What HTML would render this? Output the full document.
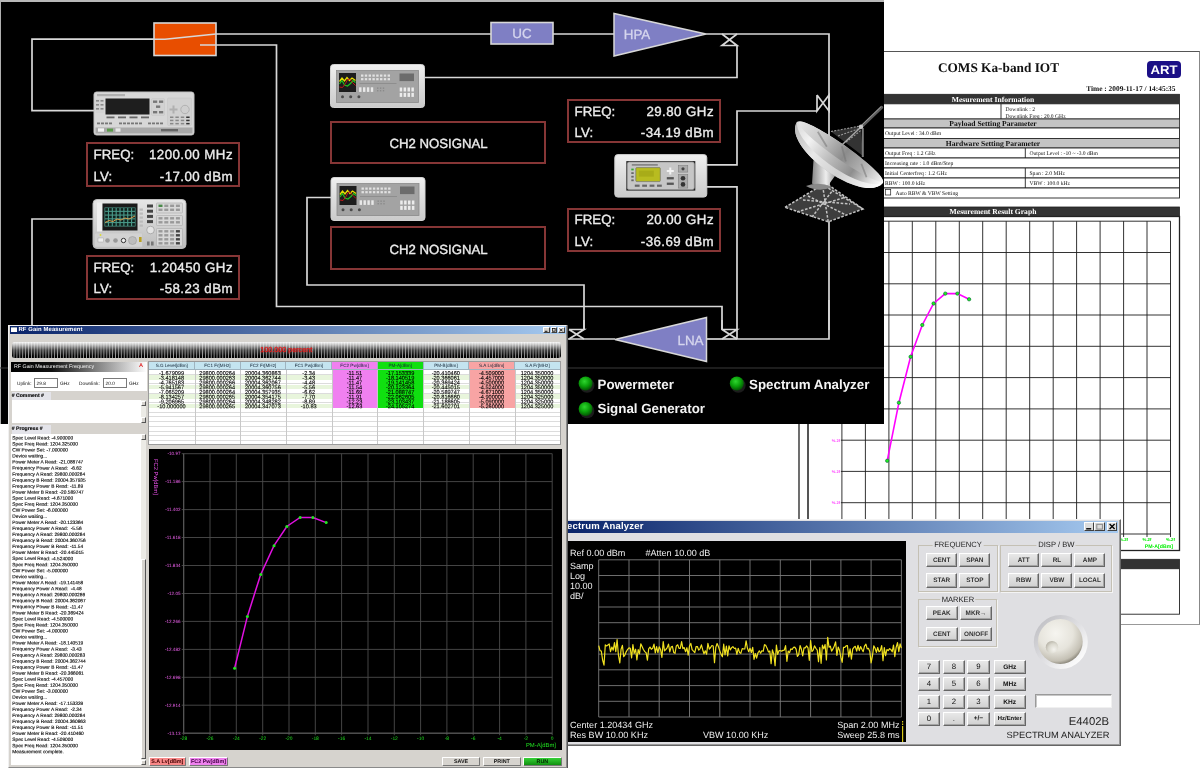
<!DOCTYPE html>
<html><head><meta charset="utf-8"><title>COMS Ka-band IOT</title>
<style>
*{box-sizing:border-box;margin:0;padding:0}
html,body{width:1200px;height:769px;overflow:hidden;background:#fff;font-family:"Liberation Sans",sans-serif}
#root{position:relative;width:1200px;height:769px;overflow:hidden;text-rendering:geometricPrecision;will-change:transform}
.abs{position:absolute}
svg{position:absolute;left:0;top:0;overflow:visible}
svg text{font-family:"Liberation Sans",sans-serif}
svg text.sf{font-family:"Liberation Serif",serif}
.fb{position:absolute;border:2px solid #863636;color:#ececec;font-size:13.3px;-webkit-text-stroke:0.35px #ececec}
.fb span{position:absolute;white-space:nowrap}
.btn{position:absolute;background:linear-gradient(180deg,#e8e8e8,#d0d0d0);border:1.3px solid #fff;border-right-color:#666;border-bottom-color:#666;box-shadow:inset -1px -1px 0 #a4a4a4;font-size:6.5px;font-weight:bold;color:#333;text-align:center;white-space:nowrap}
.grp{position:absolute;border:1px solid #c4c0b4;box-shadow:1px 1px 0 #f4f4f4}
.grp b{position:absolute;top:-5.6px;left:50%;transform:translateX(-50%);background:#dfdfe2;font-weight:normal;font-size:7.6px;color:#222;padding:0 1.5px;white-space:nowrap}
</style></head><body><div id="root">
<!-- ===== report paper ===== -->
<div class="abs" id="paper" style="left:560px;top:51px;width:640px;height:574px;background:#fff;border-top:1px solid #555;border-right:1px solid #888;border-bottom:1px solid #999"></div>
<svg width="1200" height="769" viewBox="0 0 1200 769" style="font-family:'Liberation Serif',serif">
<text x="998.5" y="72.3" text-anchor="middle" class="sf" font-weight="bold" font-size="13.3" fill="#111">COMS Ka-band IOT</text>
<rect x="1147" y="61" width="34" height="17" rx="4" fill="#1b0f86"/>
<text x="1164" y="74.3" text-anchor="middle" font-family="Liberation Sans, sans-serif" font-weight="bold" font-size="12.5" fill="#fff" textLength="27" lengthAdjust="spacingAndGlyphs">ART</text>
<text x="1175.5" y="91" text-anchor="end" class="sf" font-weight="bold" font-size="7.4" fill="#111">Time : 2009-11-17 / 14:45:35</text>
<rect x="799" y="94.3" width="380.5" height="9.5" fill="#333" stroke="#222" stroke-width="0.8"/>
<text x="993" y="101.64999999999999" text-anchor="middle" class="sf" font-weight="bold" font-size="7.6" fill="#fff">Mesurement Information</text>
<rect x="799" y="103.8" width="380.5" height="15.200000000000003" fill="#fff" stroke="#222" stroke-width="0.9"/>
<line x1="1001" y1="103.8" x2="1001" y2="119" stroke="#222" stroke-width="0.9"/>
<text x="1005.5" y="110.5" class="sf" font-size="5.6" fill="#111">Downlink : 2</text>
<text x="1005.5" y="117.8" class="sf" font-size="5.6" fill="#111">Downlink Freq : 20.0 GHz</text>
<text x="803" y="110.5" class="sf" font-size="5.6" fill="#111">Uplink : 1</text>
<text x="803" y="117.8" class="sf" font-size="5.6" fill="#111">Uplink Freq : 29.8 GHz</text>
<rect x="799" y="119" width="380.5" height="9" fill="#c4c4c4" stroke="#222" stroke-width="0.8"/>
<text x="993" y="126.1" text-anchor="middle" class="sf" font-weight="bold" font-size="7.6" fill="#111">Payload Setting Parameter</text>
<rect x="799" y="128" width="380.5" height="10.5" fill="#fff" stroke="#222" stroke-width="0.9"/>
<text x="885" y="135.3" class="sf" font-size="5.6" fill="#111">Output Level : 34.0 dBm</text>
<rect x="799" y="138.5" width="380.5" height="9.5" fill="#c4c4c4" stroke="#222" stroke-width="0.8"/>
<text x="993" y="145.85" text-anchor="middle" class="sf" font-weight="bold" font-size="7.6" fill="#111">Hardware Setting Parameter</text>
<rect x="799" y="148" width="380.5" height="10" fill="#fff" stroke="#222" stroke-width="0.9"/>
<line x1="1025.3" y1="148" x2="1025.3" y2="158" stroke="#222" stroke-width="0.9"/>
<text x="885" y="155" class="sf" font-size="5.6" fill="#111">Output Freq : 1.2 GHz</text>
<text x="1029.5" y="155" class="sf" font-size="5.6" fill="#111">Output Level : -10 ~ -3.0 dBm</text>
<rect x="799" y="158" width="380.5" height="10" fill="#fff" stroke="#222" stroke-width="0.9"/>
<text x="885" y="165" class="sf" font-size="5.6" fill="#111">Increasing rate : 1.0 dBm/Step</text>
<rect x="799" y="168" width="380.5" height="10" fill="#fff" stroke="#222" stroke-width="0.9"/>
<line x1="1025.3" y1="168" x2="1025.3" y2="178" stroke="#222" stroke-width="0.9"/>
<text x="885" y="175" class="sf" font-size="5.6" fill="#111">Initial Centerfreq : 1.2 GHz</text>
<text x="1029.5" y="175" class="sf" font-size="5.6" fill="#111">Span : 2.0 MHz</text>
<rect x="799" y="178" width="380.5" height="10" fill="#fff" stroke="#222" stroke-width="0.9"/>
<line x1="1025.3" y1="178" x2="1025.3" y2="188" stroke="#222" stroke-width="0.9"/>
<text x="885" y="185" class="sf" font-size="5.6" fill="#111">RBW : 100.0 kHz</text>
<text x="1029.5" y="185" class="sf" font-size="5.6" fill="#111">VBW : 100.0 kHz</text>
<rect x="799" y="188" width="380.5" height="10" fill="#fff" stroke="#222" stroke-width="0.9"/>
<text x="895.5" y="195" class="sf" font-size="5.6" fill="#111">Auto RBW &amp; VBW Setting</text>
<rect x="885.3" y="189.6" width="5.4" height="5.4" fill="#fff" stroke="#222" stroke-width="0.7"/>
<rect x="799" y="207" width="380.5" height="9.5" fill="#333" stroke="#222" stroke-width="0.8"/>
<text x="993" y="214.35" text-anchor="middle" class="sf" font-weight="bold" font-size="7.6" fill="#fff">Mesurement Result Graph</text>
<rect x="799" y="216.5" width="380.5" height="334" fill="#fff" stroke="#222" stroke-width="1.3"/>
<g stroke="#1c1c1c" stroke-width="0.9">
<line x1="808" y1="216.5" x2="808" y2="550" stroke-width="1.5"/>
<line x1="1170.5" y1="221.2" x2="1170.5" y2="537.0"/>
<line x1="1147.0" y1="221.2" x2="1147.0" y2="537.0"/>
<line x1="1123.6" y1="221.2" x2="1123.6" y2="537.0"/>
<line x1="1100.1" y1="221.2" x2="1100.1" y2="537.0"/>
<line x1="1076.6" y1="221.2" x2="1076.6" y2="537.0"/>
<line x1="1053.2" y1="221.2" x2="1053.2" y2="537.0"/>
<line x1="1029.7" y1="221.2" x2="1029.7" y2="537.0"/>
<line x1="1006.2" y1="221.2" x2="1006.2" y2="537.0"/>
<line x1="982.7" y1="221.2" x2="982.7" y2="537.0"/>
<line x1="959.3" y1="221.2" x2="959.3" y2="537.0"/>
<line x1="935.8" y1="221.2" x2="935.8" y2="537.0"/>
<line x1="912.3" y1="221.2" x2="912.3" y2="537.0"/>
<line x1="888.9" y1="221.2" x2="888.9" y2="537.0"/>
<line x1="865.4" y1="221.2" x2="865.4" y2="537.0"/>
<line x1="841.9" y1="221.2" x2="841.9" y2="537.0"/>
<line x1="840.9" y1="221.2" x2="1170.5" y2="221.2"/>
<line x1="840.9" y1="252.5" x2="1170.5" y2="252.5"/>
<line x1="840.9" y1="283.8" x2="1170.5" y2="283.8"/>
<line x1="840.9" y1="315.0" x2="1170.5" y2="315.0"/>
<line x1="840.9" y1="346.3" x2="1170.5" y2="346.3"/>
<line x1="840.9" y1="377.6" x2="1170.5" y2="377.6"/>
<line x1="840.9" y1="408.9" x2="1170.5" y2="408.9"/>
<line x1="840.9" y1="440.2" x2="1170.5" y2="440.2"/>
<line x1="840.9" y1="471.4" x2="1170.5" y2="471.4"/>
<line x1="840.9" y1="502.7" x2="1170.5" y2="502.7"/>
<line x1="840.9" y1="534.0" x2="1170.5" y2="534.0"/>
</g>
<polyline fill="none" stroke="#f0f" stroke-width="1.6" points="887.2,460.8 898.9,402.7 910.6,356.8 922.3,325 933.6,303.5 945.3,293.6 957.4,293.6 969.1,299.3"/>
<circle cx="887.2" cy="460.8" r="1.7" fill="#2e2" stroke="#063" stroke-width="0.6"/>
<circle cx="898.9" cy="402.7" r="1.7" fill="#2e2" stroke="#063" stroke-width="0.6"/>
<circle cx="910.6" cy="356.8" r="1.7" fill="#2e2" stroke="#063" stroke-width="0.6"/>
<circle cx="922.3" cy="325" r="1.7" fill="#2e2" stroke="#063" stroke-width="0.6"/>
<circle cx="933.6" cy="303.5" r="1.7" fill="#2e2" stroke="#063" stroke-width="0.6"/>
<circle cx="945.3" cy="293.6" r="1.7" fill="#2e2" stroke="#063" stroke-width="0.6"/>
<circle cx="957.4" cy="293.6" r="1.7" fill="#2e2" stroke="#063" stroke-width="0.6"/>
<circle cx="969.1" cy="299.3" r="1.7" fill="#2e2" stroke="#063" stroke-width="0.6"/>
<text x="840" y="222.7" text-anchor="end" font-family="Liberation Sans, sans-serif" font-size="4" font-weight="bold" fill="#f4f">%.2f</text>
<text x="840" y="254.0" text-anchor="end" font-family="Liberation Sans, sans-serif" font-size="4" font-weight="bold" fill="#f4f">%.2f</text>
<text x="840" y="285.3" text-anchor="end" font-family="Liberation Sans, sans-serif" font-size="4" font-weight="bold" fill="#f4f">%.2f</text>
<text x="840" y="316.5" text-anchor="end" font-family="Liberation Sans, sans-serif" font-size="4" font-weight="bold" fill="#f4f">%.2f</text>
<text x="840" y="347.8" text-anchor="end" font-family="Liberation Sans, sans-serif" font-size="4" font-weight="bold" fill="#f4f">%.2f</text>
<text x="840" y="379.1" text-anchor="end" font-family="Liberation Sans, sans-serif" font-size="4" font-weight="bold" fill="#f4f">%.2f</text>
<text x="840" y="410.4" text-anchor="end" font-family="Liberation Sans, sans-serif" font-size="4" font-weight="bold" fill="#f4f">%.2f</text>
<text x="840" y="441.7" text-anchor="end" font-family="Liberation Sans, sans-serif" font-size="4" font-weight="bold" fill="#f4f">%.2f</text>
<text x="840" y="472.9" text-anchor="end" font-family="Liberation Sans, sans-serif" font-size="4" font-weight="bold" fill="#f4f">%.2f</text>
<text x="840" y="504.2" text-anchor="end" font-family="Liberation Sans, sans-serif" font-size="4" font-weight="bold" fill="#f4f">%.2f</text>
<text x="840" y="535.5" text-anchor="end" font-family="Liberation Sans, sans-serif" font-size="4" font-weight="bold" fill="#f4f">%.2f</text>
<text x="1170.5" y="541" text-anchor="middle" font-family="Liberation Sans, sans-serif" font-size="4.3" font-weight="bold" fill="#0e0">%.2f</text>
<text x="1147.0" y="541" text-anchor="middle" font-family="Liberation Sans, sans-serif" font-size="4.3" font-weight="bold" fill="#0e0">%.2f</text>
<text x="1123.6" y="541" text-anchor="middle" font-family="Liberation Sans, sans-serif" font-size="4.3" font-weight="bold" fill="#0e0">%.2f</text>
<text x="1100.1" y="541" text-anchor="middle" font-family="Liberation Sans, sans-serif" font-size="4.3" font-weight="bold" fill="#0e0">%.2f</text>
<text x="1076.6" y="541" text-anchor="middle" font-family="Liberation Sans, sans-serif" font-size="4.3" font-weight="bold" fill="#0e0">%.2f</text>
<text x="1053.2" y="541" text-anchor="middle" font-family="Liberation Sans, sans-serif" font-size="4.3" font-weight="bold" fill="#0e0">%.2f</text>
<text x="1029.7" y="541" text-anchor="middle" font-family="Liberation Sans, sans-serif" font-size="4.3" font-weight="bold" fill="#0e0">%.2f</text>
<text x="1006.2" y="541" text-anchor="middle" font-family="Liberation Sans, sans-serif" font-size="4.3" font-weight="bold" fill="#0e0">%.2f</text>
<text x="982.7" y="541" text-anchor="middle" font-family="Liberation Sans, sans-serif" font-size="4.3" font-weight="bold" fill="#0e0">%.2f</text>
<text x="959.3" y="541" text-anchor="middle" font-family="Liberation Sans, sans-serif" font-size="4.3" font-weight="bold" fill="#0e0">%.2f</text>
<text x="935.8" y="541" text-anchor="middle" font-family="Liberation Sans, sans-serif" font-size="4.3" font-weight="bold" fill="#0e0">%.2f</text>
<text x="912.3" y="541" text-anchor="middle" font-family="Liberation Sans, sans-serif" font-size="4.3" font-weight="bold" fill="#0e0">%.2f</text>
<text x="888.9" y="541" text-anchor="middle" font-family="Liberation Sans, sans-serif" font-size="4.3" font-weight="bold" fill="#0e0">%.2f</text>
<text x="865.4" y="541" text-anchor="middle" font-family="Liberation Sans, sans-serif" font-size="4.3" font-weight="bold" fill="#0e0">%.2f</text>
<text x="841.9" y="541" text-anchor="middle" font-family="Liberation Sans, sans-serif" font-size="4.3" font-weight="bold" fill="#0e0">%.2f</text>
<text x="1173" y="547.5" text-anchor="end" font-family="Liberation Sans, sans-serif" font-size="5.2" font-weight="bold" fill="#0e0">PM-A[dBm]</text>
<rect x="799" y="559.3" width="380.5" height="9.4" fill="#333" stroke="#222" stroke-width="0.8"/>
<rect x="799" y="568.7" width="380.5" height="45.5" fill="#fff" stroke="#222" stroke-width="0.9"/>
<text x="993" y="566.6" text-anchor="middle" class="sf" font-weight="bold" font-size="7.6" fill="#fff">Mesurement Result Table</text>
</svg>
<!-- ===== block diagram ===== -->
<div class="abs" id="diagram" style="left:0;top:0;width:884px;height:424px;background:#000;border-top:2px solid #b8b8b8;border-left:1.5px solid #b0b0b0"></div>
<svg width="1200" height="769" viewBox="0 0 1200 769">
<g fill="none" stroke="#d8d8d8" stroke-width="1.7" stroke-linejoin="miter">
<path d="M154 39.2 H32 V110.7 H94"/>
<path d="M93 219 H32 V330"/>
<path d="M216 34 H491"/>
<path d="M553 34 H614"/>
<path d="M706 34 H829 V330"/>
<path d="M216 45 H276.5 V306.5 H722 V330"/>
<path d="M424 77.5 H737 V45.5"/>
<path d="M331 197.5 H307 V285 H584 V330"/>
<path d="M706 164.9 H737 V111 H817"/>
<path d="M706 186.8 H737 V339"/>
<path d="M829 300 V339 H737"/>
<path d="M706.5 339 H737"/>
<path d="M615 339 H567"/>
<path d="M584 320 V329.5"/>
<path d="M722 320 V329.5"/>
<path d="M722 34 L737 45.5 H722 L737 34"/>
<path d="M817 95 V111 L829 95 V111 L817 95"/>
<path d="M569 329.5 H584 L569 339 M584 339 L569 329.5"/>
<path d="M722 329.5 H737 L722 339 M737 339 L722 329.5"/>
</g>
<line x1="0" y1="368" x2="884" y2="368" stroke="#3a3a3a" stroke-width="1.2"/>
<rect x="154" y="23" width="62" height="32.5" fill="#e84e00" stroke="#d8d8d8" stroke-width="1.6"/>
<path d="M154 39.2 H165 L216 34 M200 45 H216" stroke="#d8d8d8" stroke-width="1.5" fill="none"/>
<rect x="491" y="22.5" width="62" height="21.5" fill="#7f7fc4" stroke="#d8d8d8" stroke-width="1.6"/>
<text x="522" y="38.3" text-anchor="middle" font-size="13.4" stroke="#d6d6ee" stroke-width=".3" fill="#d6d6ee">UC</text>
<path d="M614 13.5 V56 L706 34 Z" fill="#7f7fc4" stroke="#d8d8d8" stroke-width="1.5"/>
<text x="637" y="39" text-anchor="middle" font-size="13.4" stroke="#d6d6ee" stroke-width=".3" fill="#d6d6ee">HPA</text>
<path d="M706.5 317.5 V361.5 L615 339.5 Z" fill="#7f7fc4" stroke="#d8d8d8" stroke-width="1.5"/>
<text x="690.5" y="344.7" text-anchor="middle" font-size="13.4" stroke="#d6d6ee" stroke-width=".3" fill="#d6d6ee">LNA</text>
<defs>
<radialGradient id="led" cx="42%" cy="35%" r="65%"><stop offset="0" stop-color="#2fd52f"/><stop offset="0.55" stop-color="#0aa00a"/><stop offset="1" stop-color="#045404"/></radialGradient>
<linearGradient id="devg2" x1="0" y1="0" x2="0" y2="1"><stop offset="0" stop-color="#f0f0f0"/><stop offset="0.5" stop-color="#dcdcdc"/><stop offset="1" stop-color="#cbcbcb"/></linearGradient>
<linearGradient id="devg" x1="0" y1="0" x2="0" y2="1"><stop offset="0" stop-color="#e6e6e6"/><stop offset="1" stop-color="#bdbdbd"/></linearGradient>
<linearGradient id="dish" x1="0" y1="0" x2="1" y2="0"><stop offset="0" stop-color="#d8d8d8"/><stop offset="0.2" stop-color="#f2f2f2"/><stop offset="0.45" stop-color="#bcbcbc"/><stop offset="0.7" stop-color="#8e8e8e"/><stop offset="0.9" stop-color="#e4e4e4"/><stop offset="1" stop-color="#ffffff"/></linearGradient>
<linearGradient id="dishlo" x1="0" y1="0" x2="1" y2="0"><stop offset="0" stop-color="#b8b8b8"/><stop offset="0.3" stop-color="#e8e8e8"/><stop offset="0.6" stop-color="#d0d0d0"/><stop offset="1" stop-color="#ffffff"/></linearGradient>
<linearGradient id="rim" x1="0" y1="0" x2="1" y2="0"><stop offset="0" stop-color="#e4e4e4"/><stop offset="0.3" stop-color="#c4c4c4"/><stop offset="0.55" stop-color="#8c8c8c"/><stop offset="0.8" stop-color="#b8b8b8"/><stop offset="1" stop-color="#f4f4f4"/></linearGradient>
<linearGradient id="ped" x1="0" y1="0" x2="1" y2="0"><stop offset="0" stop-color="#888"/><stop offset="0.5" stop-color="#eee"/><stop offset="1" stop-color="#777"/></linearGradient>
</defs>
<circle cx="587.1" cy="385.5" r="7.3" fill="#1c1c1c"/>
<circle cx="585.6" cy="383.5" r="7" fill="url(#led)"/>
<circle cx="738.3" cy="385.5" r="7.3" fill="#1c1c1c"/>
<circle cx="736.8" cy="383.5" r="7" fill="url(#led)"/>
<circle cx="587.1" cy="411" r="7.3" fill="#1c1c1c"/>
<circle cx="585.6" cy="409" r="7" fill="url(#led)"/>
<text x="597.5" y="389" font-size="13.35" font-weight="bold" fill="#f4f4f4">Powermeter</text>
<text x="749" y="389" font-size="13.35" font-weight="bold" fill="#f4f4f4">Spectrum Analyzer</text>
<text x="597.5" y="413.3" font-size="13.35" font-weight="bold" fill="#f4f4f4">Signal Generator</text>
<g transform="translate(94,92)">
<rect x="0" y="0" width="100" height="43" rx="2.5" fill="#d7d7d7" stroke="#c2c2c2" stroke-width="1"/>
<rect x="73.5" y="6" width="24" height="27.5" rx="1" fill="#d1d1d1" stroke="#c6c6c6" stroke-width="0.6"/>
<rect x="57.5" y="6.5" width="13" height="17" rx="1" fill="#d2d2d2" stroke="#c8c8c8" stroke-width="0.6"/>
<rect x="1.5" y="7" width="8.5" height="14" rx="1" fill="#d2d2d2"/>
<rect x="3" y="2" width="28" height="2.2" fill="#b0b0b0"/>
<rect x="11.5" y="6.5" width="44" height="16" fill="#1e1e1e"/>
<rect x="1.5" y="35.5" width="97" height="6" fill="#a9a9a9"/>
<rect x="4" y="36.3" width="6" height="3.4" fill="#f4f4f4"/><rect x="13" y="36.6" width="6" height="3" fill="#5a9a4a"/><rect x="21.5" y="36.3" width="5" height="3.4" fill="#e8e8e8"/>
<rect x="67" y="37" width="17" height="2.4" fill="#666"/>
<rect x="12.5" y="24.5" width="8" height="1.8" fill="#666"/>
<rect x="24.0" y="24.5" width="8" height="1.8" fill="#666"/>
<rect x="35.5" y="24.5" width="8" height="1.8" fill="#666"/>
<rect x="47.0" y="24.5" width="8" height="1.8" fill="#666"/>
<rect x="3" y="30.5" width="3" height="1.8" fill="#777"/>
<rect x="7" y="30.5" width="3" height="1.8" fill="#777"/>
<rect x="11" y="30.5" width="3" height="1.8" fill="#777"/>
<rect x="15" y="30.5" width="3" height="1.8" fill="#777"/>
<rect x="25" y="30.5" width="3" height="1.8" fill="#777"/>
<rect x="29" y="30.5" width="3" height="1.8" fill="#777"/>
<rect x="33" y="30.5" width="3" height="1.8" fill="#777"/>
<rect x="37" y="30.5" width="3" height="1.8" fill="#777"/>
<rect x="41" y="30.5" width="3" height="1.8" fill="#777"/>
<rect x="45" y="30.5" width="3" height="1.8" fill="#777"/>
<rect x="54" y="30.5" width="3" height="1.8" fill="#777"/>
<rect x="58" y="30.5" width="3" height="1.8" fill="#777"/>
<rect x="62" y="30.5" width="3" height="1.8" fill="#777"/>
<rect x="66" y="30.5" width="3" height="1.8" fill="#777"/>
<rect x="2.0" y="8" width="3" height="1.6" fill="#8a8a8a"/>
<rect x="6.5" y="8" width="3" height="1.6" fill="#8a8a8a"/>
<rect x="2.0" y="12" width="3" height="1.6" fill="#8a8a8a"/>
<rect x="6.5" y="12" width="3" height="1.6" fill="#8a8a8a"/>
<rect x="2.0" y="16" width="3" height="1.6" fill="#8a8a8a"/>
<rect x="6.5" y="16" width="3" height="1.6" fill="#8a8a8a"/>
<rect x="59" y="8.5" width="4.2" height="2.4" fill="#777"/>
<rect x="65" y="8.5" width="4.2" height="2.4" fill="#777"/>
<rect x="62" y="13.5" width="4.2" height="2.4" fill="#777"/>
<rect x="59" y="19" width="4.2" height="2.4" fill="#777"/>
<rect x="65" y="19" width="4.2" height="2.4" fill="#777"/>
<circle cx="91" cy="17.5" r="4.2" fill="#cfcfcf" stroke="#aaa" stroke-width="0.8"/>
<path d="M79.5 13.5 v8 M75.5 17.5 h8" stroke="#b0b0b0" stroke-width="2"/>
<rect x="76.0" y="24.5" width="3.4" height="1.5" fill="#888"/>
<rect x="81.4" y="24.5" width="3.4" height="1.5" fill="#888"/>
<rect x="86.8" y="24.5" width="3.4" height="1.5" fill="#888"/>
<rect x="92.2" y="24.5" width="3.4" height="1.5" fill="#333"/>
<rect x="76.0" y="27.7" width="3.4" height="1.5" fill="#888"/>
<rect x="81.4" y="27.7" width="3.4" height="1.5" fill="#888"/>
<rect x="86.8" y="27.7" width="3.4" height="1.5" fill="#888"/>
<rect x="92.2" y="27.7" width="3.4" height="1.5" fill="#333"/>
<rect x="76.0" y="30.9" width="3.4" height="1.5" fill="#888"/>
<rect x="81.4" y="30.9" width="3.4" height="1.5" fill="#888"/>
<rect x="86.8" y="30.9" width="3.4" height="1.5" fill="#888"/>
<rect x="92.2" y="30.9" width="3.4" height="1.5" fill="#333"/>
</g>
<g transform="translate(93,199.5)">
<rect x="0" y="0" width="93" height="49" rx="4" fill="url(#devg)" stroke="#bbb" stroke-width="1"/>
<rect x="4" y="3" width="5" height="29" fill="#eee"/>
<rect x="9.5" y="4" width="35" height="27" fill="#1a1a1a"/>
<rect x="11.5" y="8" width="31" height="19" fill="#4a9a8a"/>
<rect x="12.2" y="8.6" width="2.7" height="2.7" fill="#10201c"/>
<rect x="16.05" y="8.6" width="2.7" height="2.7" fill="#10201c"/>
<rect x="19.9" y="8.6" width="2.7" height="2.7" fill="#10201c"/>
<rect x="23.75" y="8.6" width="2.7" height="2.7" fill="#10201c"/>
<rect x="27.6" y="8.6" width="2.7" height="2.7" fill="#10201c"/>
<rect x="31.45" y="8.6" width="2.7" height="2.7" fill="#10201c"/>
<rect x="35.3" y="8.6" width="2.7" height="2.7" fill="#10201c"/>
<rect x="39.15" y="8.6" width="2.7" height="2.7" fill="#10201c"/>
<rect x="12.2" y="12.35" width="2.7" height="2.7" fill="#10201c"/>
<rect x="16.05" y="12.35" width="2.7" height="2.7" fill="#10201c"/>
<rect x="19.9" y="12.35" width="2.7" height="2.7" fill="#10201c"/>
<rect x="23.75" y="12.35" width="2.7" height="2.7" fill="#10201c"/>
<rect x="27.6" y="12.35" width="2.7" height="2.7" fill="#10201c"/>
<rect x="31.45" y="12.35" width="2.7" height="2.7" fill="#10201c"/>
<rect x="35.3" y="12.35" width="2.7" height="2.7" fill="#10201c"/>
<rect x="39.15" y="12.35" width="2.7" height="2.7" fill="#10201c"/>
<rect x="12.2" y="16.1" width="2.7" height="2.7" fill="#10201c"/>
<rect x="16.05" y="16.1" width="2.7" height="2.7" fill="#10201c"/>
<rect x="19.9" y="16.1" width="2.7" height="2.7" fill="#10201c"/>
<rect x="23.75" y="16.1" width="2.7" height="2.7" fill="#10201c"/>
<rect x="27.6" y="16.1" width="2.7" height="2.7" fill="#10201c"/>
<rect x="31.45" y="16.1" width="2.7" height="2.7" fill="#10201c"/>
<rect x="35.3" y="16.1" width="2.7" height="2.7" fill="#10201c"/>
<rect x="39.15" y="16.1" width="2.7" height="2.7" fill="#10201c"/>
<rect x="12.2" y="19.85" width="2.7" height="2.7" fill="#10201c"/>
<rect x="16.05" y="19.85" width="2.7" height="2.7" fill="#10201c"/>
<rect x="19.9" y="19.85" width="2.7" height="2.7" fill="#10201c"/>
<rect x="23.75" y="19.85" width="2.7" height="2.7" fill="#10201c"/>
<rect x="27.6" y="19.85" width="2.7" height="2.7" fill="#10201c"/>
<rect x="31.45" y="19.85" width="2.7" height="2.7" fill="#10201c"/>
<rect x="35.3" y="19.85" width="2.7" height="2.7" fill="#10201c"/>
<rect x="39.15" y="19.85" width="2.7" height="2.7" fill="#10201c"/>
<rect x="12.2" y="23.6" width="2.7" height="2.7" fill="#10201c"/>
<rect x="16.05" y="23.6" width="2.7" height="2.7" fill="#10201c"/>
<rect x="19.9" y="23.6" width="2.7" height="2.7" fill="#10201c"/>
<rect x="23.75" y="23.6" width="2.7" height="2.7" fill="#10201c"/>
<rect x="27.6" y="23.6" width="2.7" height="2.7" fill="#10201c"/>
<rect x="31.45" y="23.6" width="2.7" height="2.7" fill="#10201c"/>
<rect x="35.3" y="23.6" width="2.7" height="2.7" fill="#10201c"/>
<rect x="39.15" y="23.6" width="2.7" height="2.7" fill="#10201c"/>
<polyline points="12,23 16,21 20,22 24,19.5 28,20.5 32,18.5 36,19.5 42,16.5" fill="none" stroke="#d8a050" stroke-width="1"/>
<rect x="1.5" y="33.5" width="48" height="14" rx="1" fill="#d2d2d2" stroke="#c0c0c0" stroke-width="0.5"/>
<rect x="5" y="38.5" width="5.5" height="4" fill="#eee" stroke="#999" stroke-width="0.4"/><circle cx="7.5" cy="35.5" r="0.9" fill="#dd3"/>
<circle cx="14.5" cy="41" r="2.3" fill="#999"/>
<circle cx="22.5" cy="41" r="2.3" fill="#999"/>
<circle cx="30.5" cy="41" r="2.2" fill="#eee" stroke="#333" stroke-width="1"/>
<circle cx="39.5" cy="41" r="4" fill="#bdbdbd" stroke="#999" stroke-width="0.6"/>
<rect x="46" y="37.5" width="2.6" height="5" fill="#b8a020"/>
<rect x="46.5" y="9" width="3.4" height="2.2" fill="#bbb"/>
<rect x="46.5" y="13" width="3.4" height="2.2" fill="#bbb"/>
<rect x="46.5" y="17" width="3.4" height="2.2" fill="#bbb"/>
<rect x="46.5" y="21" width="3.4" height="2.2" fill="#bbb"/>
<rect x="46.5" y="25" width="3.4" height="2.2" fill="#bbb"/>
<rect x="54" y="5.0" width="6" height="3" fill="#444"/>
<rect x="54" y="10.2" width="6" height="3" fill="#444"/>
<rect x="54" y="15.4" width="6" height="3" fill="#444"/>
<rect x="54" y="20.6" width="6" height="3" fill="#444"/>
<circle cx="57.5" cy="30.5" r="3.8" fill="#e4e4e4" stroke="#999" stroke-width="0.7"/>
<rect x="54" y="42" width="2.6" height="4" fill="#777"/><rect x="58" y="42" width="2.6" height="4" fill="#777"/>
<rect x="63.5" y="3.5" width="26" height="10" rx="0.8" fill="#d8d8d8" stroke="#aaa" stroke-width="0.6"/>
<rect x="65.5" y="5.1" width="4" height="2.4" fill="#4a8a4a"/>
<rect x="71.3" y="5.1" width="4" height="2.4" fill="#999"/>
<rect x="77.1" y="5.1" width="4" height="2.4" fill="#999"/>
<rect x="82.9" y="5.1" width="4" height="2.4" fill="#999"/>
<rect x="65.5" y="9.1" width="4" height="2.4" fill="#999"/>
<rect x="71.3" y="9.1" width="4" height="2.4" fill="#999"/>
<rect x="77.1" y="9.1" width="4" height="2.4" fill="#999"/>
<rect x="82.9" y="9.1" width="4" height="2.4" fill="#999"/>
<rect x="63.5" y="16" width="26" height="10" rx="0.8" fill="#d8d8d8" stroke="#aaa" stroke-width="0.6"/>
<rect x="65.5" y="17.6" width="4" height="2.4" fill="#999"/>
<rect x="71.3" y="17.6" width="4" height="2.4" fill="#999"/>
<rect x="77.1" y="17.6" width="4" height="2.4" fill="#999"/>
<rect x="82.9" y="17.6" width="4" height="2.4" fill="#999"/>
<rect x="65.5" y="21.6" width="4" height="2.4" fill="#999"/>
<rect x="71.3" y="21.6" width="4" height="2.4" fill="#999"/>
<rect x="77.1" y="21.6" width="4" height="2.4" fill="#999"/>
<rect x="82.9" y="21.6" width="4" height="2.4" fill="#999"/>
<rect x="63.5" y="29" width="26" height="17.5" rx="0.8" fill="#d8d8d8" stroke="#aaa" stroke-width="0.6"/>
<rect x="65.5" y="30.6" width="4" height="2.4" fill="#999"/>
<rect x="71.3" y="30.6" width="4" height="2.4" fill="#999"/>
<rect x="77.1" y="30.6" width="4" height="2.4" fill="#999"/>
<rect x="82.9" y="30.6" width="4" height="2.4" fill="#444"/>
<rect x="65.5" y="34.6" width="4" height="2.4" fill="#999"/>
<rect x="71.3" y="34.6" width="4" height="2.4" fill="#999"/>
<rect x="77.1" y="34.6" width="4" height="2.4" fill="#999"/>
<rect x="82.9" y="34.6" width="4" height="2.4" fill="#444"/>
<rect x="65.5" y="38.6" width="4" height="2.4" fill="#999"/>
<rect x="71.3" y="38.6" width="4" height="2.4" fill="#999"/>
<rect x="77.1" y="38.6" width="4" height="2.4" fill="#999"/>
<rect x="82.9" y="38.6" width="4" height="2.4" fill="#444"/>
<rect x="65.5" y="42.6" width="4" height="2.4" fill="#999"/>
<rect x="71.3" y="42.6" width="4" height="2.4" fill="#999"/>
<rect x="77.1" y="42.6" width="4" height="2.4" fill="#999"/>
<rect x="82.9" y="42.6" width="4" height="2.4" fill="#444"/>
</g>
<g transform="translate(330.5,64.5)">
<rect x="0" y="0" width="94" height="43" rx="3" fill="url(#devg2)" stroke="#d2d2d2" stroke-width="1"/>
<rect x="6" y="6" width="82" height="32" fill="#a3a3a3" stroke="#8a8a8a" stroke-width="0.8"/>
<rect x="8.5" y="8.5" width="17" height="19" fill="#1c1c1c"/>
<polyline points="9,17 11.5,13.5 14,16.5 16.5,13 19,16 21.5,13.5 25,16" fill="none" stroke="#e8e000" stroke-width="1.3"/>
<polyline points="9,19.5 11.5,16 14,20.5 17,21.5 20,19 22.5,16 25,18" fill="none" stroke="#20c020" stroke-width="1.2"/>
<polyline points="9,22.5 12,23 15,19 17,15 19,14.5 22,18 25,21" fill="none" stroke="#c01818" stroke-width="1"/>
<rect x="30.5" y="10.0" width="2.4" height="2.2" fill="#e2e2e2"/>
<rect x="34.3" y="10.0" width="2.4" height="2.2" fill="#e2e2e2"/>
<rect x="38.1" y="10.0" width="2.4" height="2.2" fill="#e2e2e2"/>
<rect x="41.9" y="10.0" width="2.4" height="2.2" fill="#e2e2e2"/>
<rect x="45.7" y="10.0" width="2.4" height="2.2" fill="#e2e2e2"/>
<rect x="49.5" y="10.0" width="2.4" height="2.2" fill="#e2e2e2"/>
<rect x="53.3" y="10.0" width="2.4" height="2.2" fill="#e2e2e2"/>
<rect x="57.099999999999994" y="10.0" width="2.4" height="2.2" fill="#e2e2e2"/>
<rect x="30.5" y="13.6" width="2.4" height="2.2" fill="#e2e2e2"/>
<rect x="34.3" y="13.6" width="2.4" height="2.2" fill="#e2e2e2"/>
<rect x="38.1" y="13.6" width="2.4" height="2.2" fill="#e2e2e2"/>
<rect x="41.9" y="13.6" width="2.4" height="2.2" fill="#e2e2e2"/>
<rect x="45.7" y="13.6" width="2.4" height="2.2" fill="#e2e2e2"/>
<rect x="49.5" y="13.6" width="2.4" height="2.2" fill="#e2e2e2"/>
<rect x="53.3" y="13.6" width="2.4" height="2.2" fill="#e2e2e2"/>
<rect x="57.099999999999994" y="13.6" width="2.4" height="2.2" fill="#e2e2e2"/>
<rect x="29" y="18.6" width="37" height="0.9" fill="#8c8c8c"/>
<rect x="28.6" y="22.8" width="2.4" height="4.6" fill="#e8e8e8"/>
<rect x="32.5" y="22.8" width="2.4" height="4.6" fill="#e8e8e8"/>
<rect x="36.4" y="22.8" width="2.4" height="4.6" fill="#e8e8e8"/>
<rect x="40.3" y="22.8" width="2.4" height="4.6" fill="#e8e8e8"/>
<rect x="46.5" y="23.0" width="1.4" height="1.3" fill="#888"/>
<rect x="49.4" y="23.0" width="1.4" height="1.3" fill="#888"/>
<rect x="52.3" y="23.0" width="1.4" height="1.3" fill="#888"/>
<rect x="46.5" y="25.6" width="1.4" height="1.3" fill="#888"/>
<rect x="49.4" y="25.6" width="1.4" height="1.3" fill="#888"/>
<rect x="52.3" y="25.6" width="1.4" height="1.3" fill="#888"/>
<rect x="69" y="9" width="14.5" height="7.6" fill="#6c6c6c"/>
<rect x="69.2" y="23.0" width="2.5" height="4" fill="#ececec"/>
<rect x="73.10000000000001" y="23.0" width="2.5" height="4" fill="#ececec"/>
<rect x="77.0" y="23.0" width="2.5" height="4" fill="#ececec"/>
<rect x="80.9" y="23.0" width="2.5" height="4" fill="#ececec"/>
<rect x="69.2" y="28.4" width="2.5" height="4" fill="#ececec"/>
<rect x="73.10000000000001" y="28.4" width="2.5" height="4" fill="#ececec"/>
<rect x="77.0" y="28.4" width="2.5" height="4" fill="#ececec"/>
<rect x="80.9" y="28.4" width="2.5" height="4" fill="#ececec"/>
<circle cx="12.0" cy="32.3" r="1.5" fill="#4a4a4a"/>
<circle cx="20.2" cy="32.3" r="1.5" fill="#4a4a4a"/>
<circle cx="28.4" cy="32.3" r="1.5" fill="#4a4a4a"/>
</g>
<g transform="translate(331,177.5)">
<rect x="0" y="0" width="94" height="43" rx="3" fill="url(#devg2)" stroke="#d2d2d2" stroke-width="1"/>
<rect x="6" y="6" width="82" height="32" fill="#a3a3a3" stroke="#8a8a8a" stroke-width="0.8"/>
<rect x="8.5" y="8.5" width="17" height="19" fill="#1c1c1c"/>
<polyline points="9,17 11.5,13.5 14,16.5 16.5,13 19,16 21.5,13.5 25,16" fill="none" stroke="#e8e000" stroke-width="1.3"/>
<polyline points="9,19.5 11.5,16 14,20.5 17,21.5 20,19 22.5,16 25,18" fill="none" stroke="#20c020" stroke-width="1.2"/>
<polyline points="9,22.5 12,23 15,19 17,15 19,14.5 22,18 25,21" fill="none" stroke="#c01818" stroke-width="1"/>
<rect x="30.5" y="10.0" width="2.4" height="2.2" fill="#e2e2e2"/>
<rect x="34.3" y="10.0" width="2.4" height="2.2" fill="#e2e2e2"/>
<rect x="38.1" y="10.0" width="2.4" height="2.2" fill="#e2e2e2"/>
<rect x="41.9" y="10.0" width="2.4" height="2.2" fill="#e2e2e2"/>
<rect x="45.7" y="10.0" width="2.4" height="2.2" fill="#e2e2e2"/>
<rect x="49.5" y="10.0" width="2.4" height="2.2" fill="#e2e2e2"/>
<rect x="53.3" y="10.0" width="2.4" height="2.2" fill="#e2e2e2"/>
<rect x="57.099999999999994" y="10.0" width="2.4" height="2.2" fill="#e2e2e2"/>
<rect x="30.5" y="13.6" width="2.4" height="2.2" fill="#e2e2e2"/>
<rect x="34.3" y="13.6" width="2.4" height="2.2" fill="#e2e2e2"/>
<rect x="38.1" y="13.6" width="2.4" height="2.2" fill="#e2e2e2"/>
<rect x="41.9" y="13.6" width="2.4" height="2.2" fill="#e2e2e2"/>
<rect x="45.7" y="13.6" width="2.4" height="2.2" fill="#e2e2e2"/>
<rect x="49.5" y="13.6" width="2.4" height="2.2" fill="#e2e2e2"/>
<rect x="53.3" y="13.6" width="2.4" height="2.2" fill="#e2e2e2"/>
<rect x="57.099999999999994" y="13.6" width="2.4" height="2.2" fill="#e2e2e2"/>
<rect x="29" y="18.6" width="37" height="0.9" fill="#8c8c8c"/>
<rect x="28.6" y="22.8" width="2.4" height="4.6" fill="#e8e8e8"/>
<rect x="32.5" y="22.8" width="2.4" height="4.6" fill="#e8e8e8"/>
<rect x="36.4" y="22.8" width="2.4" height="4.6" fill="#e8e8e8"/>
<rect x="40.3" y="22.8" width="2.4" height="4.6" fill="#e8e8e8"/>
<rect x="46.5" y="23.0" width="1.4" height="1.3" fill="#888"/>
<rect x="49.4" y="23.0" width="1.4" height="1.3" fill="#888"/>
<rect x="52.3" y="23.0" width="1.4" height="1.3" fill="#888"/>
<rect x="46.5" y="25.6" width="1.4" height="1.3" fill="#888"/>
<rect x="49.4" y="25.6" width="1.4" height="1.3" fill="#888"/>
<rect x="52.3" y="25.6" width="1.4" height="1.3" fill="#888"/>
<rect x="69" y="9" width="14.5" height="7.6" fill="#6c6c6c"/>
<rect x="69.2" y="23.0" width="2.5" height="4" fill="#ececec"/>
<rect x="73.10000000000001" y="23.0" width="2.5" height="4" fill="#ececec"/>
<rect x="77.0" y="23.0" width="2.5" height="4" fill="#ececec"/>
<rect x="80.9" y="23.0" width="2.5" height="4" fill="#ececec"/>
<rect x="69.2" y="28.4" width="2.5" height="4" fill="#ececec"/>
<rect x="73.10000000000001" y="28.4" width="2.5" height="4" fill="#ececec"/>
<rect x="77.0" y="28.4" width="2.5" height="4" fill="#ececec"/>
<rect x="80.9" y="28.4" width="2.5" height="4" fill="#ececec"/>
<circle cx="12.0" cy="32.3" r="1.5" fill="#4a4a4a"/>
<circle cx="20.2" cy="32.3" r="1.5" fill="#4a4a4a"/>
<circle cx="28.4" cy="32.3" r="1.5" fill="#4a4a4a"/>
</g>
<g transform="translate(614.8,154.6)">
<rect x="0" y="0" width="92" height="42.5" rx="3" fill="url(#devg2)" stroke="#d0d0d0" stroke-width="1"/>
<rect x="11.5" y="6.5" width="69" height="29.5" fill="#222"/><rect x="12.5" y="7.5" width="67" height="27.5" rx="2" fill="#c6c6c6" stroke="#9a9a9a" stroke-width="0.8"/>
<rect x="17" y="9.6" width="26" height="1.4" fill="#777"/>
<rect x="21" y="13" width="24.5" height="14" rx="1" fill="#b8bc20" stroke="#666" stroke-width="0.6"/>
<rect x="24" y="16" width="15" height="6" fill="#a8ac18"/>
<rect x="16.5" y="14.0" width="2.4" height="1.8" fill="#3a3"/>
<rect x="16.5" y="17.6" width="2.4" height="1.8" fill="#666"/>
<rect x="16.5" y="21.2" width="2.4" height="1.8" fill="#666"/>
<rect x="16.5" y="24.8" width="2.4" height="1.8" fill="#666"/>
<rect x="20.0" y="30" width="4.8" height="2.2" fill="#666"/>
<rect x="27.4" y="30" width="4.8" height="2.2" fill="#666"/>
<rect x="34.8" y="30" width="4.8" height="2.2" fill="#666"/>
<rect x="42.2" y="30" width="4.8" height="2.2" fill="#666"/>
<path d="M55.5 13 v7 M52 16.5 h7" stroke="#f2f2f2" stroke-width="2"/>
<rect x="52" y="22.5" width="7" height="2.3" fill="#555"/><rect x="52" y="28" width="7" height="2.3" fill="#555"/>
<rect x="63.5" y="11" width="9.5" height="6.5" fill="#aaa" stroke="#777" stroke-width="0.5"/><circle cx="68.2" cy="14.2" r="1.6" fill="#444"/>
<rect x="63.5" y="20" width="9.5" height="13.5" fill="#aaa" stroke="#777" stroke-width="0.5"/><circle cx="68.2" cy="23.6" r="2.3" fill="#333"/><circle cx="68.2" cy="29.8" r="2.3" fill="#333"/>
</g>
<g>
<path d="M785 207.3 L825.6 183 L863 209 L828.2 221.8 Z" fill="#3e3e3e"/>
<path d="M785 207.3 L825.6 183 L863 209 L828.2 221.8 Z M785 207.3 L822 185 M863 209 L823 185 M828.2 221.8 L822.5 185 M797 212 L846 197 M808 196 L846 215 M812 217 L833 190 M803 200 L850 204" fill="none" stroke="#c4c4c4" stroke-width="1.5" stroke-dasharray="2.6 1.6"/>
<path d="M831 131.5 L860.5 126 L863 156 Z" fill="#333"/>
<path d="M831 131.5 L860.5 126 M838 136 L861 128 M846 142 L861.5 130" fill="none" stroke="#9a9a9a" stroke-width="1.1" stroke-dasharray="2 1.3"/>
<path d="M862.8 128 V157" stroke="#7c7c7c" stroke-width="2"/>
<path d="M861 127 L836 150.5" stroke="#a8a8a8" stroke-width="1.4"/>
<path d="M881.6 107.4 L861.5 126.6" stroke="#5e5e5e" stroke-width="3.2" stroke-linecap="round"/>
<path d="M881.2 106.6 L861 126" stroke="#9c9c9c" stroke-width="1"/>
<circle cx="861" cy="126.8" r="2.2" fill="#c8c8c8"/>
<path d="M813.5 160 L812 183.5 Q819 189.5 828 185.5 L840 169 Z" fill="url(#ped)"/>
<path d="M806 186 Q819 181 832 187 Q819 193 806 186 Z" fill="#8a8a8a"/>
<g transform="translate(840,152.4) rotate(35.2)">
<path d="M-52.7 0 C-50 30 50 30 52.7 0 C50 -11 -50 -11 -52.7 0 Z" fill="url(#dish)"/>
<path d="M-52.7 0 C-50 30 50 30 52.7 0 C40 21 -40 21 -52.7 0 Z" fill="url(#dishlo)"/>
<ellipse cx="0" cy="-1" rx="51" ry="7.2" fill="url(#rim)"/>
<path d="M-30 -4 L-14 3 M-2 -6 L10 4 M24 -3 L36 5" stroke="#777" stroke-width="1.8" opacity="0.55"/>
</g>
</g>
</svg>
<div class="fb" style="left:86px;top:142px;width:154px;height:45px"><span style="left:5.6px;top:3.1px">FREQ:</span><span style="right:5px;top:3.1px;letter-spacing:.45px">1200.00 MHz</span><span style="left:5.6px;top:24.5px">LV:</span><span style="right:5px;top:24.5px;letter-spacing:.45px">-17.00 dBm</span></div>
<div class="fb" style="left:86px;top:255px;width:154px;height:45px"><span style="left:5.6px;top:3.0px">FREQ:</span><span style="right:5px;top:3.0px;letter-spacing:.45px">1.20450 GHz</span><span style="left:5.6px;top:24.4px">LV:</span><span style="right:5px;top:24.4px;letter-spacing:.45px">-58.23 dBm</span></div>
<div class="fb" style="left:567px;top:99px;width:154px;height:44px"><span style="left:5.6px;top:2.5px">FREQ:</span><span style="right:5px;top:2.5px;letter-spacing:.45px">29.80 GHz</span><span style="left:5.6px;top:23.9px">LV:</span><span style="right:5px;top:23.9px;letter-spacing:.45px">-34.19 dBm</span></div>
<div class="fb" style="left:567px;top:208px;width:154px;height:44px"><span style="left:5.6px;top:2.3px">FREQ:</span><span style="right:5px;top:2.3px;letter-spacing:.45px">20.00 GHz</span><span style="left:5.6px;top:23.7px">LV:</span><span style="right:5px;top:23.7px;letter-spacing:.45px">-36.69 dBm</span></div>
<div class="fb" style="left:330px;top:121px;width:216px;height:43px"><span style="left:0;right:0;top:12.9px;padding-left:1px;text-align:center;font-size:13.2px;letter-spacing:0">CH2 NOSIGNAL</span></div>
<div class="fb" style="left:330px;top:226px;width:216px;height:44px"><span style="left:0;right:0;top:13.7px;padding-left:1px;text-align:center;font-size:13.2px;letter-spacing:0">CH2 NOSIGNAL</span></div>
<!-- ===== spectrum analyzer window ===== -->
<div class="abs" id="sawin" style="left:565px;top:519px;width:556px;height:227px;background:#dfdfe2;border:1px solid #f4f4f4;border-right-color:#666;border-bottom-color:#666;box-shadow:inset -1px -1px 0 #9a9a9a">
<div class="abs" style="left:1px;top:1px;right:2px;height:11.6px;background:linear-gradient(90deg,#0a246a 0%,#a6caf0 100%)"></div>
<div class="abs" style="left:-11.5px;top:0.8px;font-size:9.5px;font-weight:bold;color:#fff;letter-spacing:.2px;white-space:nowrap">Spectrum Analyzer</div>
<div class="abs" style="left:517.6px;top:2.4px;width:10.8px;height:8.8px;background:#dcdcdc;border:1px solid #fff;border-right-color:#404040;border-bottom-color:#404040"></div>
<div class="abs" style="left:527.9px;top:2.4px;width:10.8px;height:8.8px;background:#dcdcdc;border:1px solid #fff;border-right-color:#404040;border-bottom-color:#404040"></div>
<div class="abs" style="left:540.7px;top:2.4px;width:10.8px;height:8.8px;background:#dcdcdc;border:1px solid #fff;border-right-color:#404040;border-bottom-color:#404040"></div>
</div>
<svg width="1200" height="769" viewBox="0 0 1200 769">
<path d="M1086.2 528.8 h5" stroke="#000" stroke-width="1.4"/>
<rect x="1096.8" y="524.3" width="5.6" height="4.8" fill="none" stroke="#888" stroke-width="1"/>
<path d="M1109.6 524 l5 5 M1114.6 524 l-5 5" stroke="#000" stroke-width="1.3"/>
<rect x="567.5" y="541" width="338.5" height="201" fill="#000"/>
<g stroke="#7a7a7a" stroke-width="0.9">
<line x1="598.7" y1="559.8" x2="598.7" y2="717"/>
<line x1="629.0" y1="559.8" x2="629.0" y2="717"/>
<line x1="659.2" y1="559.8" x2="659.2" y2="717"/>
<line x1="689.5" y1="559.8" x2="689.5" y2="717"/>
<line x1="719.8" y1="559.8" x2="719.8" y2="717"/>
<line x1="750.0" y1="559.8" x2="750.0" y2="717"/>
<line x1="780.3" y1="559.8" x2="780.3" y2="717"/>
<line x1="810.6" y1="559.8" x2="810.6" y2="717"/>
<line x1="840.9" y1="559.8" x2="840.9" y2="717"/>
<line x1="871.1" y1="559.8" x2="871.1" y2="717"/>
<line x1="901.4" y1="559.8" x2="901.4" y2="717"/>
<line x1="598.7" y1="559.8" x2="901.4" y2="559.8"/>
<line x1="598.7" y1="575.5" x2="901.4" y2="575.5"/>
<line x1="598.7" y1="591.2" x2="901.4" y2="591.2"/>
<line x1="598.7" y1="607.0" x2="901.4" y2="607.0"/>
<line x1="598.7" y1="622.7" x2="901.4" y2="622.7"/>
<line x1="598.7" y1="638.4" x2="901.4" y2="638.4"/>
<line x1="598.7" y1="654.1" x2="901.4" y2="654.1"/>
<line x1="598.7" y1="669.8" x2="901.4" y2="669.8"/>
<line x1="598.7" y1="685.6" x2="901.4" y2="685.6"/>
<line x1="598.7" y1="701.3" x2="901.4" y2="701.3"/>
<line x1="598.7" y1="717.0" x2="901.4" y2="717.0"/>
</g>
<polyline fill="none" stroke="#f0e020" stroke-width="1.2" stroke-linejoin="round" points="598.7,645.6 600.0,650.7 601.3,651.0 602.6,660.0 604.0,665.1 605.3,644.9 606.6,646.0 607.9,645.1 609.2,643.8 610.5,651.7 611.9,647.0 613.2,650.2 614.5,642.5 615.8,651.6 617.1,639.6 618.4,654.8 619.8,663.0 621.1,649.1 622.4,645.4 623.7,656.7 625.0,654.8 626.3,651.6 627.7,649.3 629.0,647.8 630.3,648.4 631.6,657.9 632.9,644.6 634.2,653.4 635.6,649.2 636.9,659.9 638.2,649.7 639.5,653.8 640.8,643.8 642.1,646.6 643.4,649.5 644.8,651.6 646.1,652.7 647.4,660.2 648.7,648.8 650.0,647.1 651.3,649.3 652.7,648.3 654.0,644.1 655.3,652.8 656.6,646.7 657.9,652.6 659.2,646.8 660.6,649.6 661.9,657.4 663.2,641.7 664.5,650.8 665.8,649.5 667.1,647.9 668.5,644.1 669.8,651.8 671.1,647.1 672.4,646.4 673.7,652.4 675.0,653.3 676.3,646.0 677.7,644.8 679.0,648.4 680.3,648.3 681.6,641.7 682.9,648.6 684.2,647.6 685.6,651.7 686.9,647.7 688.2,655.2 689.5,646.1 690.8,643.4 692.1,649.6 693.5,651.2 694.8,652.6 696.1,646.7 697.4,646.5 698.7,650.1 700.0,648.8 701.4,644.9 702.7,649.7 704.0,653.8 705.3,650.8 706.6,654.2 707.9,643.4 709.3,649.1 710.6,647.5 711.9,645.5 713.2,646.0 714.5,662.7 715.8,647.4 717.1,643.5 718.5,646.7 719.8,650.9 721.1,654.4 722.4,656.8 723.7,644.2 725.0,654.8 726.4,646.1 727.7,655.8 729.0,645.8 730.3,649.9 731.6,647.8 732.9,646.6 734.3,648.5 735.6,648.2 736.9,654.5 738.2,648.3 739.5,652.4 740.8,653.3 742.2,648.7 743.5,648.9 744.8,649.0 746.1,640.9 747.4,648.1 748.7,651.7 750.0,648.3 751.4,652.5 752.7,647.4 754.0,659.3 755.3,653.5 756.6,658.1 757.9,653.0 759.3,650.8 760.6,653.2 761.9,650.7 763.2,651.3 764.5,644.7 765.8,645.4 767.2,648.4 768.5,652.0 769.8,651.1 771.1,663.6 772.4,649.9 773.7,653.9 775.1,665.7 776.4,645.1 777.7,654.3 779.0,650.6 780.3,650.7 781.6,651.1 783.0,650.4 784.3,650.1 785.6,645.7 786.9,661.3 788.2,651.0 789.5,652.7 790.8,648.9 792.2,649.5 793.5,647.3 794.8,647.1 796.1,649.1 797.4,656.5 798.7,654.7 800.1,645.5 801.4,649.3 802.7,655.9 804.0,647.8 805.3,647.9 806.6,645.9 808.0,647.8 809.3,660.3 810.6,640.6 811.9,651.5 813.2,650.2 814.5,645.9 815.9,648.3 817.2,650.0 818.5,661.6 819.8,647.6 821.1,663.3 822.4,645.2 823.8,648.8 825.1,644.5 826.4,660.0 827.7,637.3 829.0,647.2 830.3,646.2 831.6,651.1 833.0,648.9 834.3,646.0 835.6,641.9 836.9,655.4 838.2,647.1 839.5,650.2 840.9,657.4 842.2,662.3 843.5,647.4 844.8,647.4 846.1,645.9 847.4,645.5 848.8,656.9 850.1,648.9 851.4,659.1 852.7,649.2 854.0,647.3 855.3,646.3 856.7,651.1 858.0,645.3 859.3,650.6 860.6,646.6 861.9,649.3 863.2,651.7 864.5,646.1 865.9,644.2 867.2,648.8 868.5,648.4 869.8,651.4 871.1,662.9 872.4,656.1 873.8,645.8 875.1,648.2 876.4,652.4 877.7,647.5 879.0,651.8 880.3,650.7 881.7,645.7 883.0,660.6 884.3,647.7 885.6,655.6 886.9,649.6 888.2,650.6 889.6,648.7 890.9,649.6 892.2,651.8 893.5,645.1 894.8,656.7 896.1,647.7 897.5,642.6 898.8,651.6 900.1,643.8 901.4,648.1"/>
<path d="M902.6 721 V742" stroke="#d8c818" stroke-width="1.2" stroke-dasharray="1.5 1 1.5 1 20"/>
<text x="570" y="556" text-anchor="start" font-size="9.05" fill="#f0f0f0">Ref 0.00 dBm</text>
<text x="645.5" y="556" text-anchor="start" font-size="9.05" fill="#f0f0f0">#Atten 10.00 dB</text>
<text x="570" y="568.5" text-anchor="start" font-size="9.05" fill="#f0f0f0">Samp</text>
<text x="570" y="578.8" text-anchor="start" font-size="9.05" fill="#f0f0f0">Log</text>
<text x="570" y="589" text-anchor="start" font-size="9.05" fill="#f0f0f0">10.00</text>
<text x="570" y="599.3" text-anchor="start" font-size="9.05" fill="#f0f0f0">dB/</text>
<text x="570" y="728" text-anchor="start" font-size="9.05" fill="#f0f0f0">Center 1.20434 GHz</text>
<text x="570" y="738.3" text-anchor="start" font-size="9.05" fill="#f0f0f0">Res BW 10.00 KHz</text>
<text x="703" y="738.3" text-anchor="start" font-size="9.05" fill="#f0f0f0">VBW 10.00 KHz</text>
<text x="899.5" y="728" text-anchor="end" font-size="9.05" fill="#f0f0f0">Span 2.00 MHz</text>
<text x="899.5" y="738.3" text-anchor="end" font-size="9.05" fill="#f0f0f0">Sweep 25.8 ms</text>
<defs><radialGradient id="knob" cx="40%" cy="32%" r="70%"><stop offset="0" stop-color="#f6f5f0"/><stop offset="0.55" stop-color="#e6e4dc"/><stop offset="0.88" stop-color="#c4c0b4"/><stop offset="1" stop-color="#8a867a"/></radialGradient>
<linearGradient id="knobsh" x1="0" y1="0" x2="1" y2="1"><stop offset="0.15" stop-color="#c4c4c8"/><stop offset="0.5" stop-color="#dfdfe2"/><stop offset="0.85" stop-color="#fbfbfb"/></linearGradient>
<radialGradient id="dimple" cx="65%" cy="68%" r="75%"><stop offset="0" stop-color="#f4f3ee"/><stop offset="0.6" stop-color="#dad8ce"/><stop offset="1" stop-color="#b4b0a4"/></radialGradient></defs>
<circle cx="1060.8" cy="642" r="27" fill="url(#knobsh)"/>
<circle cx="1060.3" cy="641.5" r="22.4" fill="url(#knob)"/>
<circle cx="1052" cy="647.2" r="6.2" fill="url(#dimple)"/>
<text x="1109" y="724.9" text-anchor="end" font-size="11.3" fill="#222">E4402B</text>
<text x="1109.5" y="738.2" text-anchor="end" font-size="9" fill="#222" textLength="103" lengthAdjust="spacingAndGlyphs">SPECTRUM ANALYZER</text>
</svg>
<div class="grp" style="left:918.3px;top:544.7px;width:79.5px;height:47.5px"><b>FREQUENCY</b></div>
<div class="grp" style="left:1000.3px;top:544.7px;width:112px;height:47.5px"><b>DISP / BW</b></div>
<div class="grp" style="left:918.3px;top:599.4px;width:79.2px;height:47.8px"><b>MARKER</b></div>
<div class="btn" style="left:926.2px;top:552.5px;width:31px;height:14.2px;line-height:13.999999999999998px;font-size:6.4px;">CENT</div>
<div class="btn" style="left:959.3px;top:552.5px;width:31px;height:14.2px;line-height:13.999999999999998px;font-size:6.4px;">SPAN</div>
<div class="btn" style="left:926.2px;top:573.4px;width:31px;height:14.2px;line-height:13.999999999999998px;font-size:6.4px;">STAR</div>
<div class="btn" style="left:959.3px;top:573.4px;width:31px;height:14.2px;line-height:13.999999999999998px;font-size:6.4px;">STOP</div>
<div class="btn" style="left:1008.2px;top:552.9px;width:31px;height:14.2px;line-height:13.999999999999998px;font-size:6.4px;">ATT</div>
<div class="btn" style="left:1041.4px;top:552.9px;width:31px;height:14.2px;line-height:13.999999999999998px;font-size:6.4px;">RL</div>
<div class="btn" style="left:1074.4px;top:552.9px;width:31px;height:14.2px;line-height:13.999999999999998px;font-size:6.4px;">AMP</div>
<div class="btn" style="left:1008.2px;top:573.4px;width:31px;height:14.2px;line-height:13.999999999999998px;font-size:6.4px;">RBW</div>
<div class="btn" style="left:1041.4px;top:573.4px;width:31px;height:14.2px;line-height:13.999999999999998px;font-size:6.4px;">VBW</div>
<div class="btn" style="left:1074.4px;top:573.4px;width:31px;height:14.2px;line-height:13.999999999999998px;font-size:6.4px;">LOCAL</div>
<div class="btn" style="left:926px;top:605.6px;width:31.5px;height:14.2px;line-height:13.999999999999998px;font-size:6.4px;">PEAK</div>
<div class="btn" style="left:960.3px;top:605.6px;width:31.5px;height:14.2px;line-height:13.999999999999998px;font-size:6.4px;">MKR→</div>
<div class="btn" style="left:926px;top:626.5px;width:31.5px;height:14.2px;line-height:13.999999999999998px;font-size:6.4px;">CENT</div>
<div class="btn" style="left:960.3px;top:626.5px;width:31.5px;height:14.2px;line-height:13.999999999999998px;font-size:6.4px;">ON/OFF</div>
<div class="btn" style="left:918px;top:659.7px;width:22px;height:14.3px;line-height:12.9px;font-size:7.8px;font-weight:normal;color:#111;">7</div>
<div class="btn" style="left:942.7px;top:659.7px;width:22.3px;height:14.3px;line-height:12.9px;font-size:7.8px;font-weight:normal;color:#111;">8</div>
<div class="btn" style="left:967.2px;top:659.7px;width:22.5px;height:14.3px;line-height:12.9px;font-size:7.8px;font-weight:normal;color:#111;">9</div>
<div class="btn" style="left:994px;top:659.7px;width:31.5px;height:14.3px;line-height:13.700000000000001px;font-size:6.6px;font-weight:bold;color:#111;">GHz</div>
<div class="btn" style="left:918px;top:677.1px;width:22px;height:14.3px;line-height:12.9px;font-size:7.8px;font-weight:normal;color:#111;">4</div>
<div class="btn" style="left:942.7px;top:677.1px;width:22.3px;height:14.3px;line-height:12.9px;font-size:7.8px;font-weight:normal;color:#111;">5</div>
<div class="btn" style="left:967.2px;top:677.1px;width:22.5px;height:14.3px;line-height:12.9px;font-size:7.8px;font-weight:normal;color:#111;">6</div>
<div class="btn" style="left:994px;top:677.1px;width:31.5px;height:14.3px;line-height:13.700000000000001px;font-size:6.6px;font-weight:bold;color:#111;">MHz</div>
<div class="btn" style="left:918px;top:694.7px;width:22px;height:14.3px;line-height:12.9px;font-size:7.8px;font-weight:normal;color:#111;">1</div>
<div class="btn" style="left:942.7px;top:694.7px;width:22.3px;height:14.3px;line-height:12.9px;font-size:7.8px;font-weight:normal;color:#111;">2</div>
<div class="btn" style="left:967.2px;top:694.7px;width:22.5px;height:14.3px;line-height:12.9px;font-size:7.8px;font-weight:normal;color:#111;">3</div>
<div class="btn" style="left:994px;top:694.7px;width:31.5px;height:14.3px;line-height:13.700000000000001px;font-size:6.6px;font-weight:bold;color:#111;">KHz</div>
<div class="btn" style="left:918px;top:712.2px;width:22px;height:14.3px;line-height:12.9px;font-size:7.8px;font-weight:normal;color:#111;">0</div>
<div class="btn" style="left:942.7px;top:712.2px;width:22.3px;height:14.3px;line-height:12.9px;font-size:7.8px;font-weight:normal;color:#111;">.</div>
<div class="btn" style="left:967.2px;top:712.2px;width:22.5px;height:14.3px;line-height:12.9px;font-size:6.6px;font-weight:bold;color:#111;">+/−</div>
<div class="btn" style="left:994px;top:712.2px;width:31.5px;height:14.3px;line-height:13.700000000000001px;font-size:5.9px;font-weight:bold;color:#111;">Hz/Enter</div>
<div class="abs" style="left:1035px;top:693.5px;width:77px;height:14.5px;background:#fff;border:1px solid #9a9a9a;border-right-color:#f0f0f0;border-bottom-color:#f0f0f0;box-shadow:inset 1px 1px 0 #c8c8c8"></div>
<!-- ===== RF Gain Measurement window ===== -->
<div class="abs" id="rfwin" style="left:8px;top:324.5px;width:558.5px;height:443px;background:#d6d3ce;border:1.2px solid #f0f0f0;border-right-color:#8a8a8a;border-bottom-color:#8a8a8a;box-shadow:1px 0 0 #555"></div>
<div class="abs" style="left:10px;top:326px;width:555.5px;height:8px;background:linear-gradient(90deg,#0a246a 0%,#a6caf0 100%)"></div>
<div class="abs" style="left:10.8px;top:327.3px;width:6px;height:5px;background:#fff;border-top:1.3px solid #9ab"></div>
<div class="abs" style="left:18.5px;top:326.1px;font-size:5.9px;line-height:8px;font-weight:bold;color:#fff;letter-spacing:.1px;white-space:nowrap">RF Gain Measurement</div>
<div class="abs" style="left:543.3px;top:327px;width:6.6px;height:5.8px;background:#d6d3ce;border:0.8px solid #fff;border-right-color:#404040;border-bottom-color:#404040"></div>
<div class="abs" style="left:550.5px;top:327px;width:6.6px;height:5.8px;background:#d6d3ce;border:0.8px solid #fff;border-right-color:#404040;border-bottom-color:#404040"></div>
<div class="abs" style="left:558px;top:327px;width:6.6px;height:5.8px;background:#d6d3ce;border:0.8px solid #fff;border-right-color:#404040;border-bottom-color:#404040"></div>
<svg width="1200" height="769" viewBox="0 0 1200 769"><path d="M544.8 331.3 h2.6" stroke="#000" stroke-width="0.9"/><rect x="552.3" y="328.6" width="2.8" height="2.6" fill="none" stroke="#000" stroke-width="0.7"/><path d="M559.8 328.6 l2.8 2.8 M562.6 328.6 l-2.8 2.8" stroke="#000" stroke-width="0.8"/></svg>
<div class="abs" style="left:11.7px;top:342px;width:549px;height:16px;border-radius:2.5px;background:linear-gradient(180deg,rgba(255,255,255,.97) 0%,rgba(235,235,235,.8) 18%,rgba(150,150,150,.45) 50%,rgba(0,0,0,0) 88%),repeating-linear-gradient(90deg,#000 0,#000 1.1px,#9a9a9a 2px,#000 2.9px)"></div>
<div class="abs" style="left:236.2px;top:344.8px;width:100px;text-align:center;font-size:7.2px;line-height:9px;color:#e81818;-webkit-text-stroke:.25px #e81818;white-space:nowrap">100.000 percent</div>
<div class="abs" style="left:11px;top:361.8px;width:135.5px;height:10.4px;background:linear-gradient(90deg,#000 0%,#111 30%,#fff 100%)"></div>
<div class="abs" style="left:14px;top:362.9px;font-size:5.3px;line-height:8px;color:#f4f4f4;white-space:nowrap">RF Gain Measurement Frequency</div>
<div class="abs" style="left:139px;top:363.3px;font-size:5.6px;line-height:7px;font-weight:bold;color:#e02020">A</div>
<div class="abs" style="left:11px;top:372.2px;width:135.5px;height:19px;background:#fff"></div>
<div class="abs" style="left:17px;top:381px;font-size:4.8px;line-height:7px;color:#111;white-space:nowrap">Uplink:</div>
<div class="abs" style="left:34px;top:378px;width:24px;height:9.6px;border:0.7px solid #7a7a7a;background:#fff;font-size:4.8px;line-height:7px;color:#111;white-space:nowrap;padding:2px 0 0 1.6px">29.8</div>
<div class="abs" style="left:60px;top:381px;font-size:4.8px;line-height:7px;color:#111;white-space:nowrap">GHz</div>
<div class="abs" style="left:79px;top:381px;font-size:4.8px;line-height:7px;color:#111;white-space:nowrap">Downlink:</div>
<div class="abs" style="left:103px;top:378px;width:24px;height:9.6px;border:0.7px solid #7a7a7a;background:#fff;font-size:4.8px;line-height:7px;color:#111;white-space:nowrap;padding:2px 0 0 1.6px">20.0</div>
<div class="abs" style="left:129px;top:381px;font-size:4.8px;line-height:7px;color:#111;white-space:nowrap">GHz</div>
<div class="abs" style="left:11.7px;top:391.8px;width:39px;height:8.4px;background:#e4e4ea;font-size:5.15px;line-height:8px;font-weight:bold;color:#000;-webkit-text-stroke:.12px #000;white-space:nowrap"># Comment #</div>
<div class="abs" style="left:11.7px;top:400.2px;width:129px;height:23px;background:#fff"></div>
<div class="abs" style="left:140.7px;top:400.2px;width:5.8px;height:23px;background:#ecebe6"></div>
<div class="abs" style="left:140.7px;top:400.6px;width:5.8px;height:5.6px;background:#d6d3ce;border:0.8px solid #fff;border-right-color:#555;border-bottom-color:#555"></div>
<div class="abs" style="left:140.7px;top:417.4px;width:5.8px;height:5.6px;background:#d6d3ce;border:0.8px solid #fff;border-right-color:#555;border-bottom-color:#555"></div>
<div class="abs" style="left:11.7px;top:424.6px;width:39px;height:9px;background:#e4e4ea;font-size:5.15px;line-height:8px;font-weight:bold;color:#000;-webkit-text-stroke:.12px #000;white-space:nowrap;padding-top:0.8px"># Progress #</div>
<div class="abs" style="left:11.4px;top:433.6px;width:129.3px;height:331.8px;background:#fff"></div>
<div class="abs" style="left:140.7px;top:433.6px;width:5.8px;height:331.8px;background:#ecebe6"></div>
<div class="abs" style="left:140.7px;top:559px;width:5.8px;height:200px;background:#d6d3ce;border:0.8px solid #fff;border-right-color:#555;border-bottom-color:#555"></div>
<div class="abs" style="left:140.7px;top:434.4px;width:5.8px;height:5.6px;background:#d6d3ce;border:0.8px solid #fff;border-right-color:#555;border-bottom-color:#555"></div>
<div class="abs" style="left:140.7px;top:759.6px;width:5.8px;height:5.6px;background:#d6d3ce;border:0.8px solid #fff;border-right-color:#555;border-bottom-color:#555"></div>
<svg width="1200" height="769" viewBox="0 0 1200 769" id="plist"><g font-size="4.8" fill="#000" stroke="#000" stroke-width="0.12">
<text x="12.3" y="439.45" transform="rotate(0.03 12.3 439.45)" xml:space="preserve">Spec Level Read: -4.900000</text>
<text x="12.3" y="445.48" transform="rotate(0.03 12.3 445.48)" xml:space="preserve">Spec Freq Read: 1204.325000</text>
<text x="12.3" y="451.52" transform="rotate(0.03 12.3 451.52)" xml:space="preserve">CW Power Set: -7.000000</text>
<text x="12.3" y="457.55" transform="rotate(0.03 12.3 457.55)" xml:space="preserve">Device waiting...</text>
<text x="12.3" y="463.58" transform="rotate(0.03 12.3 463.58)" xml:space="preserve">Power Meter A Read: -21.088747</text>
<text x="12.3" y="469.62" transform="rotate(0.03 12.3 469.62)" xml:space="preserve">Frequency Power A Read:  -6.62</text>
<text x="12.3" y="475.65" transform="rotate(0.03 12.3 475.65)" xml:space="preserve">Frequency A Read: 29800.000264</text>
<text x="12.3" y="481.68" transform="rotate(0.03 12.3 481.68)" xml:space="preserve">Frequency B Read: 20004.357935</text>
<text x="12.3" y="487.71" transform="rotate(0.03 12.3 487.71)" xml:space="preserve">Frequency Power B Read: -11.69</text>
<text x="12.3" y="493.75" transform="rotate(0.03 12.3 493.75)" xml:space="preserve">Power Meter B Read: -20.589747</text>
<text x="12.3" y="499.78" transform="rotate(0.03 12.3 499.78)" xml:space="preserve">Spec Level Read: -4.671000</text>
<text x="12.3" y="505.81" transform="rotate(0.03 12.3 505.81)" xml:space="preserve">Spec Freq Read: 1204.350000</text>
<text x="12.3" y="511.85" transform="rotate(0.03 12.3 511.85)" xml:space="preserve">CW Power Set: -6.000000</text>
<text x="12.3" y="517.88" transform="rotate(0.03 12.3 517.88)" xml:space="preserve">Device waiting...</text>
<text x="12.3" y="523.91" transform="rotate(0.03 12.3 523.91)" xml:space="preserve">Power Meter A Read: -20.123364</text>
<text x="12.3" y="529.94" transform="rotate(0.03 12.3 529.94)" xml:space="preserve">Frequency Power A Read:  -5.56</text>
<text x="12.3" y="535.98" transform="rotate(0.03 12.3 535.98)" xml:space="preserve">Frequency A Read: 29800.000264</text>
<text x="12.3" y="542.01" transform="rotate(0.03 12.3 542.01)" xml:space="preserve">Frequency B Read: 20004.360756</text>
<text x="12.3" y="548.04" transform="rotate(0.03 12.3 548.04)" xml:space="preserve">Frequency Power B Read: -11.54</text>
<text x="12.3" y="554.08" transform="rotate(0.03 12.3 554.08)" xml:space="preserve">Power Meter B Read: -20.445015</text>
<text x="12.3" y="560.11" transform="rotate(0.03 12.3 560.11)" xml:space="preserve">Spec Level Read: -4.524000</text>
<text x="12.3" y="566.14" transform="rotate(0.03 12.3 566.14)" xml:space="preserve">Spec Freq Read: 1204.350000</text>
<text x="12.3" y="572.18" transform="rotate(0.03 12.3 572.18)" xml:space="preserve">CW Power Set: -5.000000</text>
<text x="12.3" y="578.21" transform="rotate(0.03 12.3 578.21)" xml:space="preserve">Device waiting...</text>
<text x="12.3" y="584.24" transform="rotate(0.03 12.3 584.24)" xml:space="preserve">Power Meter A Read: -19.141458</text>
<text x="12.3" y="590.27" transform="rotate(0.03 12.3 590.27)" xml:space="preserve">Frequency Power A Read:  -4.48</text>
<text x="12.3" y="596.31" transform="rotate(0.03 12.3 596.31)" xml:space="preserve">Frequency A Read: 29800.000266</text>
<text x="12.3" y="602.34" transform="rotate(0.03 12.3 602.34)" xml:space="preserve">Frequency B Read: 20004.362067</text>
<text x="12.3" y="608.37" transform="rotate(0.03 12.3 608.37)" xml:space="preserve">Frequency Power B Read: -11.47</text>
<text x="12.3" y="614.41" transform="rotate(0.03 12.3 614.41)" xml:space="preserve">Power Meter B Read: -20.369424</text>
<text x="12.3" y="620.44" transform="rotate(0.03 12.3 620.44)" xml:space="preserve">Spec Level Read: -4.500000</text>
<text x="12.3" y="626.47" transform="rotate(0.03 12.3 626.47)" xml:space="preserve">Spec Freq Read: 1204.350000</text>
<text x="12.3" y="632.51" transform="rotate(0.03 12.3 632.51)" xml:space="preserve">CW Power Set: -4.000000</text>
<text x="12.3" y="638.54" transform="rotate(0.03 12.3 638.54)" xml:space="preserve">Device waiting...</text>
<text x="12.3" y="644.57" transform="rotate(0.03 12.3 644.57)" xml:space="preserve">Power Meter A Read: -18.140519</text>
<text x="12.3" y="650.61" transform="rotate(0.03 12.3 650.61)" xml:space="preserve">Frequency Power A Read:  -3.43</text>
<text x="12.3" y="656.64" transform="rotate(0.03 12.3 656.64)" xml:space="preserve">Frequency A Read: 29800.000263</text>
<text x="12.3" y="662.67" transform="rotate(0.03 12.3 662.67)" xml:space="preserve">Frequency B Read: 20004.362744</text>
<text x="12.3" y="668.70" transform="rotate(0.03 12.3 668.70)" xml:space="preserve">Frequency Power B Read: -11.47</text>
<text x="12.3" y="674.74" transform="rotate(0.03 12.3 674.74)" xml:space="preserve">Power Meter B Read: -20.366061</text>
<text x="12.3" y="680.77" transform="rotate(0.03 12.3 680.77)" xml:space="preserve">Spec Level Read: -4.457000</text>
<text x="12.3" y="686.80" transform="rotate(0.03 12.3 686.80)" xml:space="preserve">Spec Freq Read: 1204.350000</text>
<text x="12.3" y="692.84" transform="rotate(0.03 12.3 692.84)" xml:space="preserve">CW Power Set: -3.000000</text>
<text x="12.3" y="698.87" transform="rotate(0.03 12.3 698.87)" xml:space="preserve">Device waiting...</text>
<text x="12.3" y="704.90" transform="rotate(0.03 12.3 704.90)" xml:space="preserve">Power Meter A Read: -17.153339</text>
<text x="12.3" y="710.93" transform="rotate(0.03 12.3 710.93)" xml:space="preserve">Frequency Power A Read:  -2.34</text>
<text x="12.3" y="716.97" transform="rotate(0.03 12.3 716.97)" xml:space="preserve">Frequency A Read: 29800.000264</text>
<text x="12.3" y="723.00" transform="rotate(0.03 12.3 723.00)" xml:space="preserve">Frequency B Read: 20004.360863</text>
<text x="12.3" y="729.03" transform="rotate(0.03 12.3 729.03)" xml:space="preserve">Frequency Power B Read: -11.51</text>
<text x="12.3" y="735.07" transform="rotate(0.03 12.3 735.07)" xml:space="preserve">Power Meter B Read: -20.410460</text>
<text x="12.3" y="741.10" transform="rotate(0.03 12.3 741.10)" xml:space="preserve">Spec Level Read: -4.509000</text>
<text x="12.3" y="747.13" transform="rotate(0.03 12.3 747.13)" xml:space="preserve">Spec Freq Read: 1204.350000</text>
<text x="12.3" y="753.17" transform="rotate(0.03 12.3 753.17)" xml:space="preserve">Measurement complete.</text>
</g></svg>
<div class="abs" id="rftable" style="left:148.2px;top:361.3px;width:412.90000000000003px;height:84px;background:#fff;border:0.9px solid #9c9c9c;overflow:hidden">
<div class="abs" style="left:0;top:8.2px;width:100%;height:76px;background:repeating-linear-gradient(180deg,#fff 0,#fff 3.8400000000000003px,#dcdcdc 3.8400000000000003px,#dcdcdc 4.74px)"></div>
<div class="abs" style="left:0;top:12.94px;width:100%;height:4.74px;background:#e8f5dc"></div>
<div class="abs" style="left:0;top:22.42px;width:100%;height:4.74px;background:#e8f5dc"></div>
<div class="abs" style="left:0;top:31.90px;width:100%;height:4.74px;background:#e8f5dc"></div>
<div class="abs" style="left:0;top:41.38px;width:100%;height:4.74px;background:#e8f5dc"></div>
<div class="abs" style="left:0.2px;top:0;width:45.7px;height:8.2px;background:#c4e4f0;border-right:0.8px solid #9fb4c0;border-bottom:0.8px solid #9fb4c0;font-size:4.6px;line-height:7.6px;text-align:center;color:#123;white-space:nowrap">S.G Level[dBm]</div>
<div class="abs" style="left:45.9px;top:0;width:45.7px;height:8.2px;background:#c4e4f0;border-right:0.8px solid #9fb4c0;border-bottom:0.8px solid #9fb4c0;font-size:4.6px;line-height:7.6px;text-align:center;color:#123;white-space:nowrap">FC1 Fr[MHz]</div>
<div class="abs" style="left:45.5px;top:8.2px;width:0.8px;height:76px;background:#c8c8c8"></div>
<div class="abs" style="left:91.6px;top:0;width:45.7px;height:8.2px;background:#c4e4f0;border-right:0.8px solid #9fb4c0;border-bottom:0.8px solid #9fb4c0;font-size:4.6px;line-height:7.6px;text-align:center;color:#123;white-space:nowrap">FC2 Fr[MHz]</div>
<div class="abs" style="left:91.2px;top:8.2px;width:0.8px;height:76px;background:#c8c8c8"></div>
<div class="abs" style="left:137.3px;top:0;width:45.7px;height:8.2px;background:#c4e4f0;border-right:0.8px solid #9fb4c0;border-bottom:0.8px solid #9fb4c0;font-size:4.6px;line-height:7.6px;text-align:center;color:#123;white-space:nowrap">FC1 Pw[dBm]</div>
<div class="abs" style="left:136.9px;top:8.2px;width:0.8px;height:76px;background:#c8c8c8"></div>
<div class="abs" style="left:183.0px;top:8.2px;width:45.7px;height:37.9px;background:#f080f0"></div>
<div class="abs" style="left:183.0px;top:0;width:45.7px;height:8.2px;background:#f080f0;border-right:0.8px solid #9fb4c0;border-bottom:0.8px solid #9fb4c0;font-size:4.6px;line-height:7.6px;text-align:center;color:#123;white-space:nowrap">FC2 Pw[dBm]</div>
<div class="abs" style="left:182.6px;top:8.2px;width:0.8px;height:76px;background:#c8c8c8"></div>
<div class="abs" style="left:228.7px;top:8.2px;width:45.7px;height:37.9px;background:#10e010"></div>
<div class="abs" style="left:228.7px;top:0;width:45.7px;height:8.2px;background:#10e010;border-right:0.8px solid #9fb4c0;border-bottom:0.8px solid #9fb4c0;font-size:4.6px;line-height:7.6px;text-align:center;color:#123;white-space:nowrap">PM-A[dBm]</div>
<div class="abs" style="left:228.3px;top:8.2px;width:0.8px;height:76px;background:#c8c8c8"></div>
<div class="abs" style="left:274.4px;top:0;width:45.7px;height:8.2px;background:#c4e4f0;border-right:0.8px solid #9fb4c0;border-bottom:0.8px solid #9fb4c0;font-size:4.6px;line-height:7.6px;text-align:center;color:#123;white-space:nowrap">PM-B[dBm]</div>
<div class="abs" style="left:274.0px;top:8.2px;width:0.8px;height:76px;background:#c8c8c8"></div>
<div class="abs" style="left:320.1px;top:8.2px;width:45.7px;height:37.9px;background:#f8a4a4"></div>
<div class="abs" style="left:320.1px;top:0;width:45.7px;height:8.2px;background:#f8a4a4;border-right:0.8px solid #9fb4c0;border-bottom:0.8px solid #9fb4c0;font-size:4.6px;line-height:7.6px;text-align:center;color:#123;white-space:nowrap">S.A Lv[dBm]</div>
<div class="abs" style="left:319.7px;top:8.2px;width:0.8px;height:76px;background:#c8c8c8"></div>
<div class="abs" style="left:365.8px;top:0;width:45.7px;height:8.2px;background:#c4e4f0;border-right:0.8px solid #9fb4c0;border-bottom:0.8px solid #9fb4c0;font-size:4.6px;line-height:7.6px;text-align:center;color:#123;white-space:nowrap">S.A Fr[MHz]</div>
<div class="abs" style="left:365.4px;top:8.2px;width:0.8px;height:76px;background:#c8c8c8"></div>
</div>
<svg width="1200" height="769" viewBox="0 0 1200 769"><g font-size="5.6" fill="#000" stroke="#000" stroke-width="0.1" text-anchor="middle">
<text x="171.5" y="375.00" transform="rotate(0.03 171.5 375.00)">-1.679099</text>
<text x="217.2" y="375.00" transform="rotate(0.03 217.2 375.00)">29800.000264</text>
<text x="262.9" y="375.00" transform="rotate(0.03 262.9 375.00)">20004.360863</text>
<text x="308.7" y="375.00" transform="rotate(0.03 308.7 375.00)">-2.34</text>
<text x="354.4" y="375.00" transform="rotate(0.03 354.4 375.00)">-11.51</text>
<text x="400.1" y="375.00" transform="rotate(0.03 400.1 375.00)">-17.153339</text>
<text x="445.8" y="375.00" transform="rotate(0.03 445.8 375.00)">-20.410460</text>
<text x="491.5" y="375.00" transform="rotate(0.03 491.5 375.00)">-4.509000</text>
<text x="537.1" y="375.00" transform="rotate(0.03 537.1 375.00)">1204.350000</text>
<text x="171.5" y="379.75" transform="rotate(0.03 171.5 379.75)">-3.418148</text>
<text x="217.2" y="379.75" transform="rotate(0.03 217.2 379.75)">29800.000263</text>
<text x="262.9" y="379.75" transform="rotate(0.03 262.9 379.75)">20004.362744</text>
<text x="308.7" y="379.75" transform="rotate(0.03 308.7 379.75)">-3.43</text>
<text x="354.4" y="379.75" transform="rotate(0.03 354.4 379.75)">-11.47</text>
<text x="400.1" y="379.75" transform="rotate(0.03 400.1 379.75)">-18.140519</text>
<text x="445.8" y="379.75" transform="rotate(0.03 445.8 379.75)">-20.366061</text>
<text x="491.5" y="379.75" transform="rotate(0.03 491.5 379.75)">-4.457000</text>
<text x="537.1" y="379.75" transform="rotate(0.03 537.1 379.75)">1204.350000</text>
<text x="171.5" y="384.50" transform="rotate(0.03 171.5 384.50)">-4.765183</text>
<text x="217.2" y="384.50" transform="rotate(0.03 217.2 384.50)">29800.000266</text>
<text x="262.9" y="384.50" transform="rotate(0.03 262.9 384.50)">20004.362067</text>
<text x="308.7" y="384.50" transform="rotate(0.03 308.7 384.50)">-4.48</text>
<text x="354.4" y="384.50" transform="rotate(0.03 354.4 384.50)">-11.47</text>
<text x="400.1" y="384.50" transform="rotate(0.03 400.1 384.50)">-19.141458</text>
<text x="445.8" y="384.50" transform="rotate(0.03 445.8 384.50)">-20.369424</text>
<text x="491.5" y="384.50" transform="rotate(0.03 491.5 384.50)">-4.500000</text>
<text x="537.1" y="384.50" transform="rotate(0.03 537.1 384.50)">1204.350000</text>
<text x="171.5" y="389.25" transform="rotate(0.03 171.5 389.25)">-5.941567</text>
<text x="217.2" y="389.25" transform="rotate(0.03 217.2 389.25)">29800.000264</text>
<text x="262.9" y="389.25" transform="rotate(0.03 262.9 389.25)">20004.360756</text>
<text x="308.7" y="389.25" transform="rotate(0.03 308.7 389.25)">-5.56</text>
<text x="354.4" y="389.25" transform="rotate(0.03 354.4 389.25)">-11.54</text>
<text x="400.1" y="389.25" transform="rotate(0.03 400.1 389.25)">-20.123364</text>
<text x="445.8" y="389.25" transform="rotate(0.03 445.8 389.25)">-20.445015</text>
<text x="491.5" y="389.25" transform="rotate(0.03 491.5 389.25)">-4.524000</text>
<text x="537.1" y="389.25" transform="rotate(0.03 537.1 389.25)">1204.350000</text>
<text x="171.5" y="394.00" transform="rotate(0.03 171.5 394.00)">-7.065209</text>
<text x="217.2" y="394.00" transform="rotate(0.03 217.2 394.00)">29800.000264</text>
<text x="262.9" y="394.00" transform="rotate(0.03 262.9 394.00)">20004.357935</text>
<text x="308.7" y="394.00" transform="rotate(0.03 308.7 394.00)">-6.62</text>
<text x="354.4" y="394.00" transform="rotate(0.03 354.4 394.00)">-11.69</text>
<text x="400.1" y="394.00" transform="rotate(0.03 400.1 394.00)">-21.088747</text>
<text x="445.8" y="394.00" transform="rotate(0.03 445.8 394.00)">-20.589747</text>
<text x="491.5" y="394.00" transform="rotate(0.03 491.5 394.00)">-4.671000</text>
<text x="537.1" y="394.00" transform="rotate(0.03 537.1 394.00)">1204.350000</text>
<text x="171.5" y="398.75" transform="rotate(0.03 171.5 398.75)">-8.134257</text>
<text x="217.2" y="398.75" transform="rotate(0.03 217.2 398.75)">29800.000265</text>
<text x="262.9" y="398.75" transform="rotate(0.03 262.9 398.75)">20004.354175</text>
<text x="308.7" y="398.75" transform="rotate(0.03 308.7 398.75)">-7.70</text>
<text x="354.4" y="398.75" transform="rotate(0.03 354.4 398.75)">-11.91</text>
<text x="400.1" y="398.75" transform="rotate(0.03 400.1 398.75)">-22.062605</text>
<text x="445.8" y="398.75" transform="rotate(0.03 445.8 398.75)">-20.816660</text>
<text x="491.5" y="398.75" transform="rotate(0.03 491.5 398.75)">-4.900000</text>
<text x="537.1" y="398.75" transform="rotate(0.03 537.1 398.75)">1204.325000</text>
<text x="171.5" y="403.50" transform="rotate(0.03 171.5 403.50)">-9.206965</text>
<text x="217.2" y="403.50" transform="rotate(0.03 217.2 403.50)">29800.000264</text>
<text x="262.9" y="403.50" transform="rotate(0.03 262.9 403.50)">20004.348282</text>
<text x="308.7" y="403.50" transform="rotate(0.03 308.7 403.50)">-8.89</text>
<text x="354.4" y="403.50" transform="rotate(0.03 354.4 403.50)">-12.23</text>
<text x="400.1" y="403.50" transform="rotate(0.03 400.1 403.50)">-23.103437</text>
<text x="445.8" y="403.50" transform="rotate(0.03 445.8 403.50)">-21.188605</text>
<text x="491.5" y="403.50" transform="rotate(0.03 491.5 403.50)">-5.090000</text>
<text x="537.1" y="403.50" transform="rotate(0.03 537.1 403.50)">1204.325000</text>
<text x="171.5" y="408.25" transform="rotate(0.03 171.5 408.25)">-10.000000</text>
<text x="217.2" y="408.25" transform="rotate(0.03 217.2 408.25)">29800.000265</text>
<text x="262.9" y="408.25" transform="rotate(0.03 262.9 408.25)">20004.347073</text>
<text x="308.7" y="408.25" transform="rotate(0.03 308.7 408.25)">-10.83</text>
<text x="354.4" y="408.25" transform="rotate(0.03 354.4 408.25)">-12.63</text>
<text x="400.1" y="408.25" transform="rotate(0.03 400.1 408.25)">-24.105274</text>
<text x="445.8" y="408.25" transform="rotate(0.03 445.8 408.25)">-21.602701</text>
<text x="491.5" y="408.25" transform="rotate(0.03 491.5 408.25)">-5.260000</text>
<text x="537.1" y="408.25" transform="rotate(0.03 537.1 408.25)">1204.325000</text>
</g></svg>
<div class="abs" style="left:148.5px;top:449.3px;width:413px;height:300.4px;background:#000"></div>
<svg width="1200" height="769" viewBox="0 0 1200 769">
<g stroke="#4c4c4c" stroke-width="0.9">
<line x1="183.7" y1="453.7" x2="183.7" y2="735.2"/>
<line x1="210.0" y1="453.7" x2="210.0" y2="735.2"/>
<line x1="236.3" y1="453.7" x2="236.3" y2="735.2"/>
<line x1="262.7" y1="453.7" x2="262.7" y2="735.2"/>
<line x1="289.0" y1="453.7" x2="289.0" y2="735.2"/>
<line x1="315.3" y1="453.7" x2="315.3" y2="735.2"/>
<line x1="341.6" y1="453.7" x2="341.6" y2="735.2"/>
<line x1="368.0" y1="453.7" x2="368.0" y2="735.2"/>
<line x1="394.3" y1="453.7" x2="394.3" y2="735.2"/>
<line x1="420.6" y1="453.7" x2="420.6" y2="735.2"/>
<line x1="446.9" y1="453.7" x2="446.9" y2="735.2"/>
<line x1="473.2" y1="453.7" x2="473.2" y2="735.2"/>
<line x1="499.6" y1="453.7" x2="499.6" y2="735.2"/>
<line x1="525.9" y1="453.7" x2="525.9" y2="735.2"/>
<line x1="552.2" y1="453.7" x2="552.2" y2="735.2"/>
<line x1="181.7" y1="453.7" x2="552.2" y2="453.7"/>
<line x1="181.7" y1="481.6" x2="552.2" y2="481.6"/>
<line x1="181.7" y1="509.6" x2="552.2" y2="509.6"/>
<line x1="181.7" y1="537.5" x2="552.2" y2="537.5"/>
<line x1="181.7" y1="565.5" x2="552.2" y2="565.5"/>
<line x1="181.7" y1="593.5" x2="552.2" y2="593.5"/>
<line x1="181.7" y1="621.4" x2="552.2" y2="621.4"/>
<line x1="181.7" y1="649.4" x2="552.2" y2="649.4"/>
<line x1="181.7" y1="677.3" x2="552.2" y2="677.3"/>
<line x1="181.7" y1="705.2" x2="552.2" y2="705.2"/>
<line x1="181.7" y1="733.2" x2="552.2" y2="733.2"/>
</g>
<path d="M183.7 453.7 V733.2 H552.2" fill="none" stroke="#5c5c5c" stroke-width="1"/>
<text x="180.5" y="455.2" text-anchor="end" font-size="4.6" fill="#ec60ec">-10.97</text>
<text x="180.5" y="483.1" text-anchor="end" font-size="4.6" fill="#ec60ec">-11.186</text>
<text x="180.5" y="511.1" text-anchor="end" font-size="4.6" fill="#ec60ec">-11.402</text>
<text x="180.5" y="539.0" text-anchor="end" font-size="4.6" fill="#ec60ec">-11.618</text>
<text x="180.5" y="567.0" text-anchor="end" font-size="4.6" fill="#ec60ec">-11.834</text>
<text x="180.5" y="595.0" text-anchor="end" font-size="4.6" fill="#ec60ec">-12.05</text>
<text x="180.5" y="622.9" text-anchor="end" font-size="4.6" fill="#ec60ec">-12.266</text>
<text x="180.5" y="650.9" text-anchor="end" font-size="4.6" fill="#ec60ec">-12.482</text>
<text x="180.5" y="678.8" text-anchor="end" font-size="4.6" fill="#ec60ec">-12.698</text>
<text x="180.5" y="706.8" text-anchor="end" font-size="4.6" fill="#ec60ec">-12.914</text>
<text x="180.5" y="734.7" text-anchor="end" font-size="4.6" fill="#ec60ec">-13.13</text>
<text x="183.7" y="740" text-anchor="middle" font-size="4.9" fill="#20e020">-28</text>
<text x="210.0" y="740" text-anchor="middle" font-size="4.9" fill="#20e020">-26</text>
<text x="236.3" y="740" text-anchor="middle" font-size="4.9" fill="#20e020">-24</text>
<text x="262.7" y="740" text-anchor="middle" font-size="4.9" fill="#20e020">-22</text>
<text x="289.0" y="740" text-anchor="middle" font-size="4.9" fill="#20e020">-20</text>
<text x="315.3" y="740" text-anchor="middle" font-size="4.9" fill="#20e020">-18</text>
<text x="341.6" y="740" text-anchor="middle" font-size="4.9" fill="#20e020">-16</text>
<text x="368.0" y="740" text-anchor="middle" font-size="4.9" fill="#20e020">-14</text>
<text x="394.3" y="740" text-anchor="middle" font-size="4.9" fill="#20e020">-12</text>
<text x="420.6" y="740" text-anchor="middle" font-size="4.9" fill="#20e020">-10</text>
<text x="446.9" y="740" text-anchor="middle" font-size="4.9" fill="#20e020">-8</text>
<text x="473.2" y="740" text-anchor="middle" font-size="4.9" fill="#20e020">-6</text>
<text x="499.6" y="740" text-anchor="middle" font-size="4.9" fill="#20e020">-4</text>
<text x="525.9" y="740" text-anchor="middle" font-size="4.9" fill="#20e020">-2</text>
<text x="552.2" y="740" text-anchor="middle" font-size="4.9" fill="#20e020">0</text>
<text x="556" y="746.5" text-anchor="end" font-size="5.9" fill="#20e020">PM-A[dBm]</text>
<text transform="translate(154,459) rotate(90)" font-size="5.8" fill="#e850e8">FC2 Pw[dBm]</text>
<polyline fill="none" stroke="#e010e0" stroke-width="1.5" points="234.6,668.2 247.4,616.4 260.7,574.4 274,545.7 286.8,526.5 300.1,517.5 312.9,517.5 326.2,522.6"/>
<circle cx="234.6" cy="668.2" r="1.5" fill="#20e820"/>
<circle cx="247.4" cy="616.4" r="1.5" fill="#20e820"/>
<circle cx="260.7" cy="574.4" r="1.5" fill="#20e820"/>
<circle cx="274" cy="545.7" r="1.5" fill="#20e820"/>
<circle cx="286.8" cy="526.5" r="1.5" fill="#20e820"/>
<circle cx="300.1" cy="517.5" r="1.5" fill="#20e820"/>
<circle cx="312.9" cy="517.5" r="1.5" fill="#20e820"/>
<circle cx="326.2" cy="522.6" r="1.5" fill="#20e820"/>
</svg>
<div class="abs" style="left:148.6px;top:756.6px;width:37.5px;height:9px;background:#f88888;color:#400;font-size:5.4px;line-height:8.2px;font-weight:bold;text-align:center;white-space:nowrap;border:0.9px solid #fff;border-right-color:#777;border-bottom-color:#777;border-radius:1.2px">S.A Lv[dBm]</div>
<div class="abs" style="left:189px;top:756.6px;width:39px;height:9px;background:#ee82ee;color:#404;font-size:5.4px;line-height:8.2px;font-weight:bold;text-align:center;white-space:nowrap;border:0.9px solid #fff;border-right-color:#777;border-bottom-color:#777;border-radius:1.2px">FC2 Pw[dBm]</div>
<div class="abs" style="left:441.8px;top:757px;width:38.5px;height:9.4px;background:#d6d3ce;color:#111;font-size:5.4px;line-height:8.2px;font-weight:bold;text-align:center;white-space:nowrap;border:0.9px solid #fff;border-right-color:#777;border-bottom-color:#777;border-radius:1.2px">SAVE</div>
<div class="abs" style="left:482.5px;top:757px;width:38.5px;height:9.4px;background:#d6d3ce;color:#111;font-size:5.4px;line-height:8.2px;font-weight:bold;text-align:center;white-space:nowrap;border:0.9px solid #fff;border-right-color:#777;border-bottom-color:#777;border-radius:1.2px">PRINT</div>
<div class="abs" style="left:523px;top:757px;width:38.7px;height:9.4px;background:linear-gradient(180deg,#38d038,#109010);color:#020;font-size:5.4px;line-height:8.2px;font-weight:bold;text-align:center;white-space:nowrap;border:0.9px solid #fff;border-right-color:#777;border-bottom-color:#777;border-radius:1.2px">RUN</div>
</div></body></html>
